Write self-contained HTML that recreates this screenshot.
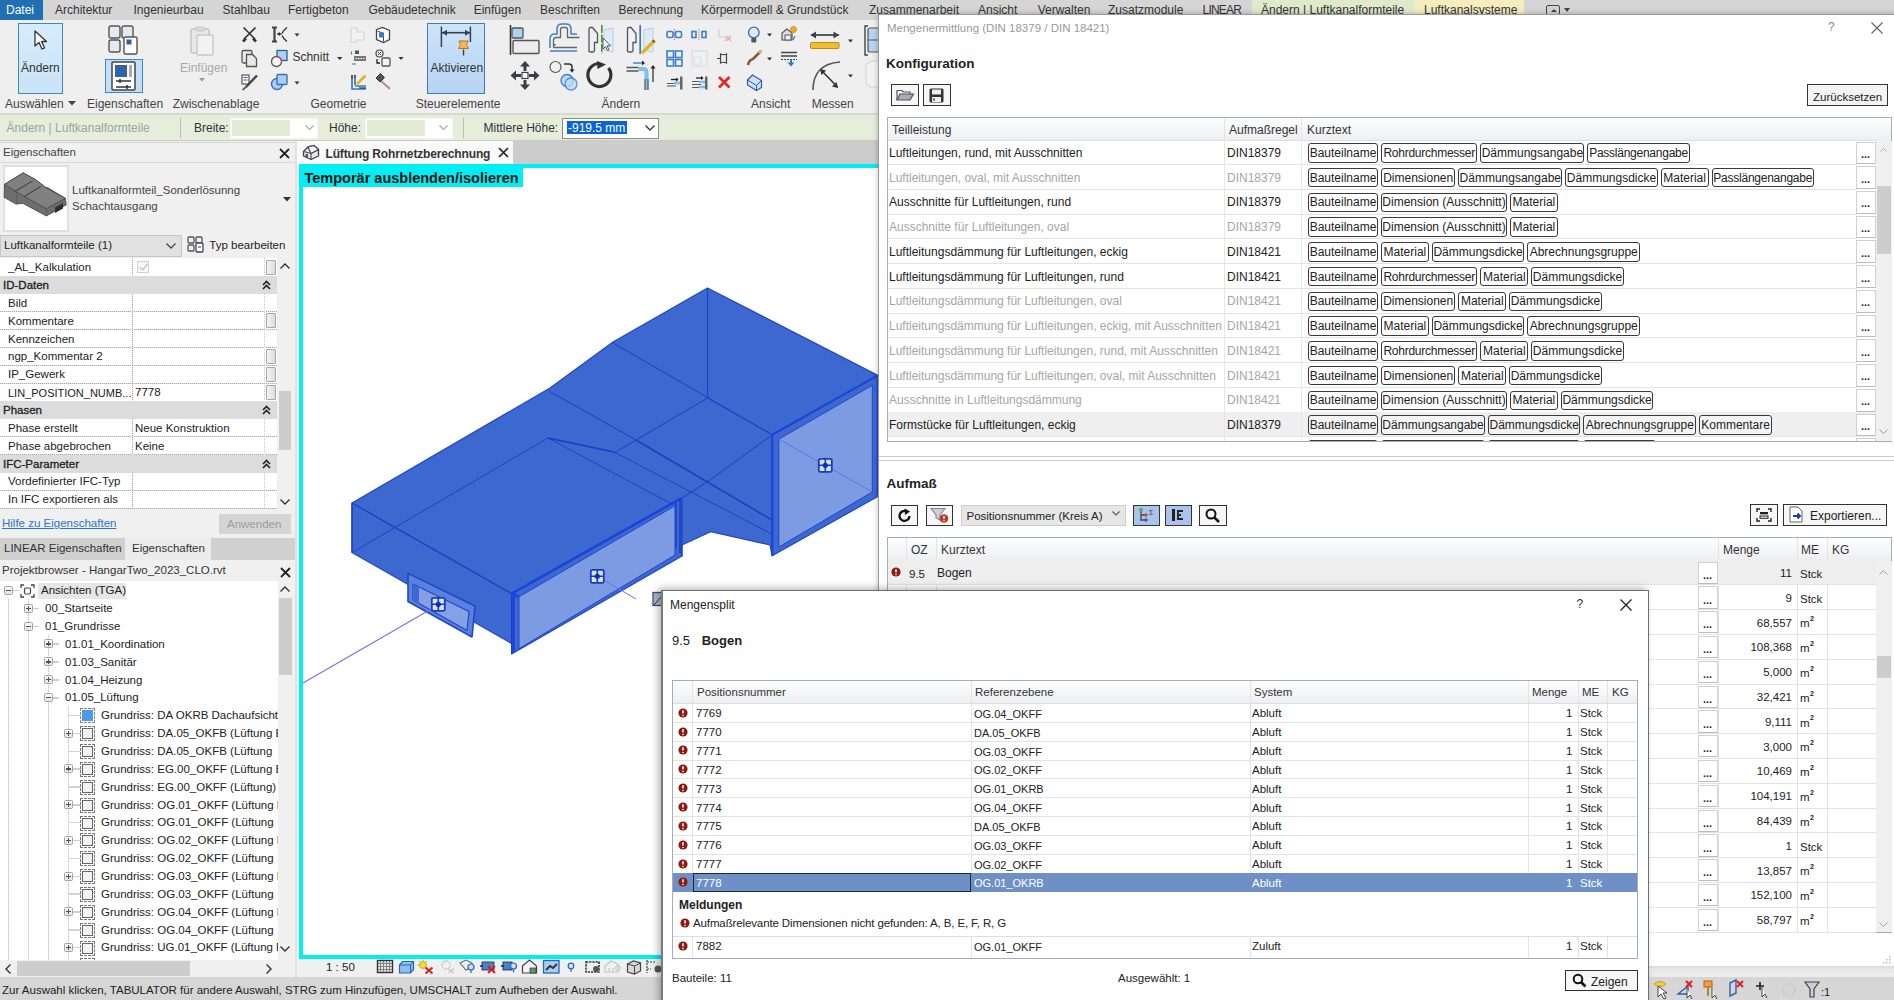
<!DOCTYPE html><html><head><meta charset="utf-8"><style>
html,body{margin:0;padding:0}
body{width:1894px;height:1000px;position:relative;overflow:hidden;background:#f0f0f0;font-family:"Liberation Sans",sans-serif;font-size:12px;color:#222}
.t{position:absolute;white-space:pre;line-height:1.15}
.b{position:absolute;box-sizing:border-box}
svg{position:absolute;overflow:visible}
</style></head><body>
<div class="b" style="left:0px;top:0px;width:1894px;height:20px;background:#d5d5d5"></div>
<div class="b" style="left:0px;top:0px;width:43px;height:19.5px;background:#1f6fb2"></div>
<div class="t" style="left:6px;top:4.3px;font-size:12px;color:#ffffff;">Datei</div>
<div class="t" style="left:55px;top:4.3px;font-size:12px;color:#333;">Architektur</div>
<div class="t" style="left:133.5px;top:4.3px;font-size:12px;color:#333;">Ingenieurbau</div>
<div class="t" style="left:222.6px;top:4.3px;font-size:12px;color:#333;">Stahlbau</div>
<div class="t" style="left:288px;top:4.3px;font-size:12px;color:#333;">Fertigbeton</div>
<div class="t" style="left:368.4px;top:4.3px;font-size:12px;color:#333;">Gebäudetechnik</div>
<div class="t" style="left:473.7px;top:4.3px;font-size:12px;color:#333;">Einfügen</div>
<div class="t" style="left:540px;top:4.3px;font-size:12px;color:#333;">Beschriften</div>
<div class="t" style="left:618.4px;top:4.3px;font-size:12px;color:#333;">Berechnung</div>
<div class="t" style="left:701px;top:4.3px;font-size:12px;color:#333;">Körpermodell &amp; Grundstück</div>
<div class="t" style="left:869px;top:4.3px;font-size:12px;color:#333;">Zusammenarbeit</div>
<div class="t" style="left:978px;top:4.3px;font-size:12px;color:#333;">Ansicht</div>
<div class="t" style="left:1037.7px;top:4.3px;font-size:12px;color:#333;">Verwalten</div>
<div class="t" style="left:1108px;top:4.3px;font-size:12px;color:#333;">Zusatzmodule</div>
<div class="t" style="left:1202.6px;top:4.3px;font-size:12px;color:#333;letter-spacing:-0.8px">LINEAR</div>
<div class="b" style="left:1251.5px;top:0px;width:162.5px;height:20px;background:#dfeacb"></div>
<div class="t" style="left:1261px;top:4.3px;font-size:12px;color:#333;">Ändern | Luftkanalformteile</div>
<div class="b" style="left:1414px;top:0px;width:110px;height:20px;background:#f6ecc0"></div>
<div class="t" style="left:1424px;top:4.3px;font-size:12px;color:#333;">Luftkanalsysteme</div>
<div class="b" style="left:1546px;top:5px;width:14px;height:10px;border:1.3px solid #444;border-radius:2px"></div>
<svg style="left:1550px;top:7px" width="8" height="6"><path d="M1 5 L4 2 L7 5Z" fill="#444"/></svg>
<svg style="left:1564px;top:8px" width="6" height="4"><path d="M0 0 L6 0 L3 4Z" fill="#444"/></svg>
<div class="b" style="left:0px;top:19.5px;width:879px;height:94px;background:#efefef"></div>
<div class="b" style="left:0px;top:112.5px;width:879px;height:1.5px;background:#d8d8d8"></div>
<div class="b" style="left:17.5px;top:22.5px;width:45px;height:71px;background:linear-gradient(#d6ecfb,#c9e4f7);border:1.5px solid #3f86c4"></div>
<svg style="left:33px;top:30px" width="16" height="22"><path d="M2 1 L2 16 L6 12.5 L9 19 L11.5 18 L8.7 11.5 L13.5 11.5 Z" fill="#fff" stroke="#333" stroke-width="1.3" stroke-linejoin="round"/></svg>
<div class="t" style="left:21px;top:61.8px;font-size:12px;color:#333;">Ändern</div>
<svg style="left:108px;top:25px" width="32" height="31"><rect x="1" y="1" width="11" height="12" rx="2" fill="#e6e8ee" stroke="#555" stroke-width="1.4"/><rect x="14" y="1" width="11" height="12" rx="2" fill="#e6e8ee" stroke="#555" stroke-width="1.4"/><rect x="1" y="15" width="11" height="12" rx="2" fill="#e6e8ee" stroke="#555" stroke-width="1.4"/><rect x="16" y="12" width="13" height="17" rx="1.5" fill="#fff" stroke="#555" stroke-width="1.4"/><rect x="18.5" y="14.5" width="5" height="5" fill="#2f5ea3"/></svg>
<div class="b" style="left:105px;top:59.4px;width:37.6px;height:33.2px;background:#c3def6;border:1.5px solid #3f86c4"></div>
<svg style="left:111px;top:61px" width="26" height="31"><rect x="1" y="1" width="23" height="28" rx="1" fill="#fff" stroke="#444" stroke-width="1.5"/><rect x="4" y="4" width="12" height="12" fill="#2f62a8"/><rect x="18" y="4" width="3" height="12" fill="#aaa"/><path d="M5 20 H20 M9 18v4 M5 26 H20 M16 24v4" stroke="#333" stroke-width="1.5"/></svg>
<svg style="left:188px;top:26px" width="30" height="32"><rect x="3" y="3" width="18" height="24" rx="2" fill="#e8e8e8" stroke="#c4c4c4" stroke-width="1.4"/><rect x="9" y="9" width="16" height="20" rx="1" fill="#f2f2f2" stroke="#c8c8c8" stroke-width="1.4"/><rect x="8" y="1" width="8" height="4" rx="1" fill="#ddd" stroke="#c4c4c4"/></svg>
<div class="t" style="left:180px;top:61.8px;font-size:12px;color:#a8a8a8;">Einfügen</div>
<svg style="left:199px;top:78px" width="6" height="4"><path d="M0 0 L6 0 L3 3.5Z" fill="#999"/></svg>
<div class="b" style="left:427.2px;top:22.8px;width:58px;height:70.8px;background:linear-gradient(#cde4fa,#b5d3f3);border:1.5px solid #3c7dc0"></div>
<div class="t" style="left:430.5px;top:61.8px;font-size:12px;color:#333;">Aktivieren</div>
<svg style="left:0;top:0" width="880" height="114">
<path d="M441.4 26.6 v20.4 M470.4 26.6 v15.4" stroke="#3a3f4a" stroke-width="1.5"/><path d="M442 32.7 h28" stroke="#3a3f4a" stroke-width="1.6"/><path d="M442 32.7 l5 -3 v6z M470 32.7 l-5 -3 v6z" fill="#3a3f4a"/><path d="M459 41 h9 l-1 2.5 q-1 1 0 2 l1.5 3 h-10 l1.5 -3 q1 -1 0 -2z" fill="#f4b850" stroke="#c07020" stroke-width="1"/><path d="M463.5 49.5 v6" stroke="#3a3f4a" stroke-width="1.4"/>
<g stroke="#333" stroke-width="1.6" fill="none"><path d="M243.5 27.5 L255 39 M255.5 27.5 L244 39"/><path d="M243 41.5 l3 -3 M256 41.5 l-3 -3" stroke-width="2.6"/></g>
<rect x="242" y="50.5" width="10" height="12.5" rx="1.5" fill="#eaeaea" stroke="#555" stroke-width="1.3"/><path d="M246.5 54.5 h6 l4 4 v8 h-10z" fill="#e8e8e8" stroke="#555" stroke-width="1.3"/>
<rect x="242" y="75" width="7" height="9" fill="#fff" stroke="#555" stroke-width="1.2"/><path d="M243.5 77.5h4 M243.5 80h4" stroke="#2e63ad" stroke-width="1.2"/><path d="M257 75.5 L246 87" stroke="#444" stroke-width="2.4"/><path d="M246.5 86.5 l-4 3.5" stroke="#666" stroke-width="2"/>
<path d="M272 27.5 h5 M272 41.5 h5 M274.5 27.5 v14" stroke="#444" stroke-width="2.2" fill="none"/><path d="M287 27.5 q-4 3 -5 6 M287 41.5 q-4 -3 -5 -6 M277.5 34 h4" stroke="#333" stroke-width="1.3" fill="none"/><path d="M277 34 l3 -2 v4z" fill="#333"/>
<path d="M294.5 33.5 h5 l-2.5 3z" fill="#333"/>
<rect x="277" y="50.5" width="10" height="10" fill="#a8d4f0" stroke="#2e5e9e" stroke-width="1.3"/><circle cx="276.5" cy="61.5" r="5" fill="#fff" stroke="#555" stroke-width="1.3"/><path d="M277 56.5 a5 5 0 0 1 4.5 5" stroke="#e0407a" stroke-width="1.3" fill="none"/>
<path d="M337 57 h5.5 l-2.75 3z" fill="#333"/>
<circle cx="277" cy="84" r="5.5" fill="#a9cff0" stroke="#3a70b8" stroke-width="1.4"/><rect x="277" y="74.5" width="10" height="10" rx="1" fill="#a9cff0" stroke="#3a70b8" stroke-width="1.4"/>
<path d="M294.5 81.5 h5 l-2.5 3z" fill="#333"/>
<path d="M351 28 h6 v4 h7 v8 h-7 v2 h-6z" fill="#f2f2f2" stroke="#d4d4d4" stroke-width="1.2"/>
<path d="M376.5 29.5 l6 -2 l7 3 v9 l-6 3 l-7 -3z" fill="#fff" stroke="#444" stroke-width="1.3"/><path d="M377.5 31 l6 2.5 v8" fill="none" stroke="#444" stroke-width="1"/><rect x="379" y="32.5" width="5" height="5" fill="#3a78c8"/>
<rect x="354" y="56" width="12" height="5" fill="#777"/><path d="M355.5 58.5h9" stroke="#fff" stroke-width="1" stroke-dasharray="1.5 1"/><rect x="355" y="50.5" width="4" height="3.5" fill="#555"/><path d="M351.5 51.5 v3 M352 64 h4" stroke="#3a78c8" stroke-width="1.2"/>
<circle cx="379.5" cy="53.5" r="3.5" fill="none" stroke="#444" stroke-width="1.2"/><path d="M378 52 l3 3 M381 52 l-3 3" stroke="#444" stroke-width="1"/><rect x="382" y="58" width="8" height="8" rx="1" fill="#f2f2f2" stroke="#555" stroke-width="1.3"/><path d="M377 59 v4 h3" stroke="#222" stroke-width="1.3" fill="none"/>
<path d="M398.5 57 h5 l-2.5 3z" fill="#333"/>
<path d="M352 75 v14 h14 M355 75 v10 M355 86 h11" stroke="#3a78c8" stroke-width="1.7" fill="none"/><path d="M352 75 v4 M355 75v3" stroke="#555" stroke-width="1.7"/><path d="M357 84 L365.5 75.5" stroke="#e8b020" stroke-width="2.6"/><path d="M359 88 h7" stroke="#333" stroke-width="1.2"/>
<path d="M380 80 L390 89" stroke="#c08a8a" stroke-width="2.2"/><path d="M376 78 l4.5 -4.5 l4 4 l-4.5 4.5z" fill="#555" stroke="#333" stroke-width="1"/>
<path d="M510.5 25 v30" stroke="#333" stroke-width="1.6"/><rect x="512" y="28" width="11" height="10" rx="1" fill="#a8d4f0" stroke="#555" stroke-width="1.3"/><rect x="513" y="40.5" width="26" height="13" rx="1" fill="#ececf0" stroke="#555" stroke-width="1.4"/>
<path d="M550 51 h27" stroke="#3a80cc" stroke-width="1.5"/><path d="M553 47 q0 -3 3 -3 h0 M556 44 v-6 h0" stroke="none"/><path d="M550 48 v-9 q0 -5 5 -5 h2 v-5 q0 -5 5 -5 h4 q5 0 5 5 v5 h6" stroke="#3a80cc" stroke-width="1.5" fill="none"/><path d="M553.5 47.5 v-7 q0 -3 3 -3 h4 v-8 q0 -2 2 -2 h3 q2 0 2 2 v8 h12 M553.5 47.5 h23.5" stroke="#666" stroke-width="1.3" fill="none"/>
<path d="M589 52 v-23 q0 -1.5 1.5 -1.5 h2 l5 6 v9 h-3 v8 q0 1.5 -1.5 1.5 h-2.5 q-1.5 0 -1.5 -1.5z" fill="#f0f0f4" stroke="#555" stroke-width="1.3"/><path d="M601.8 25 v29" stroke="#3a9a3a" stroke-width="1.6" stroke-dasharray="8 1.5"/><path d="M604 30 l9 -2 v24 l-9 -2z" fill="#dcecf8" stroke="#bcd" stroke-width="1"/><path d="M603 38 v11 l2.5 -2.5 l2 4 l1.5 -0.7 l-2 -4 h3.5z" fill="#fff" stroke="#444" stroke-width="0.9"/>
<path d="M627.5 52 v-23 q0 -1.5 1.5 -1.5 h2 l5 6 v9 h-3 v8 q0 1.5 -1.5 1.5 h-2.5 q-1.5 0 -1.5 -1.5z" fill="#f0f0f4" stroke="#555" stroke-width="1.3"/><path d="M640.2 25 v29" stroke="#3a78c8" stroke-width="1.7"/><path d="M644 30 l9 -2 v24 l-9 -2z" fill="#dcecf8" stroke="#bcd" stroke-width="1"/><path d="M642 53 L653 42" stroke="#e8b020" stroke-width="3.2"/><path d="M653 42 l1.5 -1.5" stroke="#8a5a20" stroke-width="3.2"/>
<path d="M525 61 l-5 5.5 h10z M525 90 l-5 -5.5 h10z M510.5 75.5 l5.5 -5 v10z M539.5 75.5 l-5.5 -5 v10z" fill="#3a3f4a"/><path d="M525 66 v5 M525 80 v5 M516 75.5 h5 M529 75.5 h5" stroke="#3a3f4a" stroke-width="3"/><rect x="522" y="72.5" width="6" height="6" fill="#fff" stroke="#3a3f4a" stroke-width="1.2"/>
<circle cx="555.5" cy="67" r="5.5" fill="#f0f0f4" stroke="#555" stroke-width="1.2"/><path d="M564 64 h5 q3 0 3 3 v3" stroke="#333" stroke-width="1.5" fill="none"/><path d="M569.5 69.5 h5 l-2.5 3z" fill="#222"/>
<circle cx="567" cy="80.5" r="6" fill="#bcdcf4" stroke="#3a80cc" stroke-width="1.3"/><circle cx="571" cy="84" r="6" fill="#bcdcf4" stroke="#3a80cc" stroke-width="1.3" opacity="0.8"/>
<path d="M608.5 68 A11.5 11.5 0 1 1 599 63.5" stroke="#333" stroke-width="3.2" fill="none"/><path d="M597 61 l9 3.5 -8.5 4.5z" fill="#333"/>
<path d="M626.5 67.5 h12 M626.5 71 h12" stroke="#555" stroke-width="1.3"/><path d="M638 69 h5.5 q3 0 3 3 v18" stroke="#7cc0f0" stroke-width="4" fill="none"/><path d="M645 79 v11 M648 79 v11" stroke="#555" stroke-width="1.1"/><path d="M633 63 h11" stroke="#3a80cc" stroke-width="1.4"/><path d="M645 63 l-3 -2.5 v5z" fill="#222"/><path d="M653 67 v15" stroke="#333" stroke-width="1.3"/><path d="M653 65 l-2.5 3.5 h5z" fill="#222"/>
<g stroke="#3a80cc" stroke-width="1.6" fill="none">
<rect x="667" y="31.5" width="6" height="6" rx="1.5"/><rect x="675.5" y="31.5" width="6" height="6" rx="1.5"/><path d="M673 34.5 h2.5"/>
<rect x="692" y="31.5" width="4" height="6"/><rect x="702" y="31.5" width="4" height="6"/>
<rect x="667" y="51" width="6.5" height="6.5"/><rect x="675.5" y="51" width="6.5" height="6.5"/><rect x="667" y="59.5" width="6.5" height="6.5"/><rect x="675.5" y="59.5" width="6.5" height="6.5"/>
</g>
<path d="M674.5 29 v11 M699 29 v11" stroke="#e0709a" stroke-width="1.1" stroke-dasharray="1.5 1"/>
<path d="M719 29 v8 h6 v4" stroke="#d0d0d0" stroke-width="1.2" fill="none"/><path d="M726 36 l5 5 M731 36 l-5 5" stroke="#e0a0b0" stroke-width="1.3"/>
<rect x="692" y="51" width="15" height="15" fill="#eef2f6" stroke="#d8dde2" stroke-width="1.2"/><rect x="694" y="57" width="7" height="7" fill="none" stroke="#d8dde2" stroke-width="1"/>
<path d="M717 58.5 h3 M720.5 54 q3 1.5 6 0 v9 q-3 -1.5 -6 0z" fill="#eee" stroke="#444" stroke-width="1.2"/>
<path d="M667 83.5 h9 M667 86 h9" stroke="#555" stroke-width="1.2"/><path d="M674 83 h6" stroke="#7cc0f0" stroke-width="3"/><path d="M671 79.5 h7" stroke="#222" stroke-width="1.3"/><path d="M678.5 79.5 l-2.5 -2 v4z" fill="#222"/><rect x="680" y="76.5" width="2.5" height="13" fill="#666"/>
<path d="M692 81.5 h9 M692 84.5 h9 M692 87.5 h9" stroke="#555" stroke-width="1.2"/><path d="M699 82 h7 M699 87 h7" stroke="#7cc0f0" stroke-width="2.5"/><path d="M696 78 h7" stroke="#222" stroke-width="1.3"/><path d="M703.5 78 l-2.5 -2 v4z" fill="#222"/><rect x="705" y="76.5" width="2.5" height="13" fill="#666"/>
<path d="M719 77 L729.5 87.5 M729.5 77 L719 87.5" stroke="#e02a2a" stroke-width="2.8"/>
<circle cx="753.8" cy="32.5" r="5.3" fill="#d8ecfc" stroke="#3a6cb0" stroke-width="1.3"/><rect x="751.3" y="38" width="5" height="4.5" rx="1" fill="#555"/><path d="M767 33.5 h5 l-2.5 3z" fill="#333"/>
<path d="M782 40 v-7 l5 -4 l5 4 v7z" fill="#dde" stroke="#555" stroke-width="1.2"/><rect x="785" y="35" width="6" height="5" fill="#f4f4f4" stroke="#555" stroke-width="1"/><circle cx="793.5" cy="29.5" r="3" fill="#f0a830" stroke="#d08010" stroke-width="0.8"/><path d="M795 36 l-2 4" stroke="#3a78c8" stroke-width="1.3"/>
<path d="M748 65 q1 -5 5 -6 l8 -8" stroke="#8a5a30" stroke-width="2.6" fill="none"/><path d="M759 53 l3 -3" stroke="#e0c080" stroke-width="2.2"/><path d="M767 57.5 h5 l-2.5 3z" fill="#333"/>
<path d="M781 52.5 h16 M781 56 h16" stroke="#444" stroke-width="1.3"/><path d="M781 59.5 h16" stroke="#444" stroke-width="1.1" stroke-dasharray="2 1"/><path d="M790 59.5 v3 h-2.5 l3.5 4 l3.5 -4 h-2.5 v-3z" fill="#2a78d8"/>
<path d="M747.5 80 l5 -5 l9 5.5 v7 l-5 3 l-9 -5.5z" fill="#cfe0f6" stroke="#2e5e9e" stroke-width="1.2"/><path d="M747.5 80 l9 5.5 v5 M756.5 85.5 l5 -5" stroke="#2e5e9e" stroke-width="1" fill="none"/>
<path d="M811 35 h28" stroke="#3a3f4a" stroke-width="1.7"/><path d="M810.5 35 l5.5 -3.5 v7z M839 35 l-5.5 -3.5 v7z" fill="#3a3f4a"/><rect x="810.5" y="42.5" width="28.5" height="6" rx="1" fill="#ecc030" stroke="#b89010" stroke-width="1"/><path d="M848 39.5 h5 l-2.5 3z" fill="#333"/>
<path d="M813 90 q0 -26 27 -28" stroke="#555" stroke-width="1.6" fill="none"/><path d="M821 70 L837.5 87" stroke="#333" stroke-width="1.5"/><path d="M820 69 l6 1.5 l-4.5 4.5z M838 88 l-1.5 -6 l-4.5 4.5z" fill="#333"/><path d="M848 74.5 h5 l-2.5 3z" fill="#333"/>
<path d="M868 26 h-3 v29 h3" stroke="#444" stroke-width="1.4" fill="none"/><rect x="868" y="28" width="11" height="24" rx="2" fill="#b9d3f0" stroke="#555" stroke-width="1.2"/><path d="M868 40 h11" stroke="#555"/>
<path d="M866 64 l6 -3 h7 v26 h-9 l-4 -3z" fill="#f2f2f2" stroke="#d6d6d6" stroke-width="1.2"/>
</svg>
<div class="t" style="left:292.4px;top:51.3px;font-size:12px;color:#333;">Schnitt</div>
<div class="t" style="left:5px;top:97.8px;font-size:12px;color:#444;">Auswählen</div>
<div class="t" style="left:87px;top:97.8px;font-size:12px;color:#444;">Eigenschaften</div>
<div class="t" style="left:172.7px;top:97.8px;font-size:12px;color:#444;">Zwischenablage</div>
<div class="t" style="left:310.5px;top:97.8px;font-size:12px;color:#444;">Geometrie</div>
<div class="t" style="left:415.7px;top:97.8px;font-size:12px;color:#444;">Steuerelemente</div>
<div class="t" style="left:601.5px;top:97.8px;font-size:12px;color:#444;">Ändern</div>
<div class="t" style="left:751px;top:97.8px;font-size:12px;color:#444;">Ansicht</div>
<div class="t" style="left:811.7px;top:97.8px;font-size:12px;color:#444;">Messen</div>
<svg style="left:68px;top:101px" width="8" height="5"><path d="M0 0 L8 0 L4 4.5Z" fill="#444"/></svg>
<div class="b" style="left:0px;top:114px;width:879px;height:27px;background:#e6edda;border-top:1px solid #d5dcc8;border-bottom:1px solid #c8cdbf"></div>
<div class="t" style="left:6.6px;top:122.3px;font-size:12px;color:#a0a4a0;">Ändern | Luftkanalformteile</div>
<div class="b" style="left:180px;top:118px;width:1px;height:20px;background:#b8bcb4"></div>
<div class="t" style="left:194px;top:122.3px;font-size:12px;color:#333;">Breite:</div>
<div class="b" style="left:230px;top:118px;width:88px;height:20.5px;background:#fff;border:1px solid #f4f4f4"></div>
<div class="b" style="left:232px;top:120px;width:58px;height:16px;background:#e3ecd4"></div>
<svg style="left:305px;top:125px" width="9" height="6"><path d="M0.5 0.5 L4.5 4.5 L8.5 0.5" stroke="#aaa" fill="none" stroke-width="1.2"/></svg>
<div class="t" style="left:329px;top:122.3px;font-size:12px;color:#333;">Höhe:</div>
<div class="b" style="left:364.6px;top:118px;width:88px;height:20.5px;background:#fff;border:1px solid #f4f4f4"></div>
<div class="b" style="left:366.6px;top:120px;width:58px;height:16px;background:#e3ecd4"></div>
<svg style="left:439px;top:125px" width="9" height="6"><path d="M0.5 0.5 L4.5 4.5 L8.5 0.5" stroke="#aaa" fill="none" stroke-width="1.2"/></svg>
<div class="b" style="left:463px;top:118px;width:1px;height:20px;background:#b8bcb4"></div>
<div class="t" style="left:483.5px;top:122.3px;font-size:12px;color:#333;">Mittlere Höhe:</div>
<div class="b" style="left:561.6px;top:117.5px;width:97px;height:21px;background:#fff;border:1px solid #8a8a8a"></div>
<div class="b" style="left:567px;top:121px;width:60px;height:13px;background:#0a64d4"></div>
<div class="t" style="left:568px;top:122.3px;font-size:12px;color:#fff;">-919.5 mm</div>
<svg style="left:645px;top:125px" width="10" height="6"><path d="M0.5 0.5 L5 5 L9.5 0.5" stroke="#333" fill="none" stroke-width="1.3"/></svg>
<div class="b" style="left:0px;top:141px;width:295px;height:836px;background:#f0f0f0"></div>
<div class="b" style="left:295px;top:141px;width:2px;height:836px;background:#e2e2e2"></div>
<div class="b" style="left:0px;top:141.5px;width:295px;height:1px;background:#d6d6d6"></div>
<div class="t" style="left:3px;top:146.3px;font-size:11.5px;color:#444;">Eigenschaften</div>
<svg style="left:279px;top:148px" width="11" height="11"><path d="M1 1 L10 10 M10 1 L1 10" stroke="#222" stroke-width="1.8"/></svg>
<div class="b" style="left:0px;top:162px;width:295px;height:1px;background:#d8d8d8"></div>
<div class="b" style="left:2.5px;top:164.5px;width:66px;height:67px;background:#fff;border:2px solid #e0e0e0"></div>
<svg style="left:0;top:0" width="70" height="235"><path d="M4.6 184.3 L23.2 172.9 L35.7 179.8 L45.6 187.4 L47.9 187.8 L65.4 198.4 L66.2 204.9 L46.4 215.9 L22.8 203.3 L16 204.1 L4.2 197.3 Z" fill="#6e6e6e" stroke="#4a4a4a" stroke-width="0.9"/><path d="M4.6 184.3 L23.2 172.9 L35.7 179.8 L45.6 187.4 L65.4 198.4 L46.4 208.7 L24.3 196.5 L16.7 192 Z" fill="#808080" stroke="#4a4a4a" stroke-width="0.9"/><path d="M15.2 191.2 L32.7 180.9 M24.3 196.5 L41 186.2" stroke="#444" stroke-width="1.1"/><path d="M46.4 208.7 V215.9 M16.7 192 V204" stroke="#555" stroke-width="0.8"/><path d="M55 207.5 L63 203 V208.5 L55 213 Z" fill="#2e2e2e"/></svg>
<div class="t" style="left:72px;top:184.0px;font-size:11.5px;color:#444;">Luftkanalformteil_Sonderlösunng</div>
<div class="t" style="left:72px;top:199.8px;font-size:11.5px;color:#444;">Schachtausgang</div>
<svg style="left:283px;top:197px" width="8" height="5"><path d="M0 0 L8 0 L4 4.5Z" fill="#333"/></svg>
<div class="b" style="left:0px;top:235.3px;width:182px;height:22.2px;background:#e1e1e1;border:1px solid #c6c6c6"></div>
<div class="t" style="left:4px;top:239.3px;font-size:11.5px;color:#222;">Luftkanalformteile (1)</div>
<svg style="left:166px;top:243px" width="10" height="6"><path d="M0.5 0.5 L5 5 L9.5 0.5" stroke="#444" fill="none" stroke-width="1.3"/></svg>
<svg style="left:187px;top:236px" width="18" height="17"><rect x="1" y="1" width="6" height="6" rx="1" fill="none" stroke="#555" stroke-width="1.3"/><rect x="9" y="1" width="6" height="6" rx="1" fill="none" stroke="#555" stroke-width="1.3"/><rect x="1" y="9" width="6" height="6" rx="1" fill="none" stroke="#555" stroke-width="1.3"/><rect x="9" y="7" width="7" height="9" rx="1" fill="#fff" stroke="#445" stroke-width="1.3"/><path d="M11 11h3" stroke="#345" /></svg>
<div class="t" style="left:209.3px;top:239.3px;font-size:11.5px;color:#222;">Typ bearbeiten</div>
<div class="b" style="left:0px;top:258.3px;width:277px;height:250.04px;background:#fff"></div>
<div class="b" style="left:0px;top:275.66px;width:277px;height:1px;background:repeating-linear-gradient(90deg,#a8a8a8 0 1px,#e4e4e4 1px 2px)"></div>
<div class="b" style="left:131.5px;top:258.3px;width:1.5px;height:17.86px;background:repeating-linear-gradient(180deg,#a8a8a8 0 1px,#f0f0f0 1px 2px)"></div>
<div class="b" style="left:264px;top:258.3px;width:1px;height:17.86px;background:repeating-linear-gradient(180deg,#c8c8c8 0 1px,#fff 1px 2px)"></div>
<div class="t" style="left:8px;top:261.1px;font-size:11.5px;color:#222;width:123px;overflow:hidden">_AL_Kalkulation</div>
<div class="b" style="left:137px;top:261.3px;width:12px;height:12px;border:1px solid #d0d0d0;background:#f8f8f8"></div>
<svg style="left:139px;top:263.3px" width="9" height="8"><path d="M0.5 4 L3.5 7 L8.5 1" stroke="#c4c4c4" fill="none" stroke-width="1.2"/></svg>
<div class="b" style="left:266px;top:259.8px;width:10px;height:14.86px;background:linear-gradient(90deg,#f4f4f4,#dcdcdc);border:1px solid #a8a8a8;border-radius:1px"></div>
<div class="b" style="left:0px;top:276.16px;width:277px;height:17.86px;background:#dcdcdc"></div>
<div class="t" style="left:3px;top:279.0px;font-size:11.5px;color:#222;-webkit-text-stroke:0.3px #222">ID-Daten</div>
<svg style="left:262px;top:280.2px" width="9" height="10"><path d="M1 5 L4.5 1.5 L8 5 M1 9 L4.5 5.5 L8 9" stroke="#222" stroke-width="1.6" fill="none"/></svg>
<div class="b" style="left:0px;top:311.38px;width:277px;height:1px;background:repeating-linear-gradient(90deg,#a8a8a8 0 1px,#e4e4e4 1px 2px)"></div>
<div class="b" style="left:131.5px;top:294.02px;width:1.5px;height:17.86px;background:repeating-linear-gradient(180deg,#a8a8a8 0 1px,#f0f0f0 1px 2px)"></div>
<div class="b" style="left:264px;top:294.02px;width:1px;height:17.86px;background:repeating-linear-gradient(180deg,#c8c8c8 0 1px,#fff 1px 2px)"></div>
<div class="t" style="left:8px;top:296.8px;font-size:11.5px;color:#222;width:123px;overflow:hidden">Bild</div>
<div class="b" style="left:0px;top:329.24px;width:277px;height:1px;background:repeating-linear-gradient(90deg,#a8a8a8 0 1px,#e4e4e4 1px 2px)"></div>
<div class="b" style="left:131.5px;top:311.88px;width:1.5px;height:17.86px;background:repeating-linear-gradient(180deg,#a8a8a8 0 1px,#f0f0f0 1px 2px)"></div>
<div class="b" style="left:264px;top:311.88px;width:1px;height:17.86px;background:repeating-linear-gradient(180deg,#c8c8c8 0 1px,#fff 1px 2px)"></div>
<div class="t" style="left:8px;top:314.7px;font-size:11.5px;color:#222;width:123px;overflow:hidden">Kommentare</div>
<div class="b" style="left:266px;top:313.38px;width:10px;height:14.86px;background:linear-gradient(90deg,#f4f4f4,#dcdcdc);border:1px solid #a8a8a8;border-radius:1px"></div>
<div class="b" style="left:0px;top:347.1px;width:277px;height:1px;background:repeating-linear-gradient(90deg,#a8a8a8 0 1px,#e4e4e4 1px 2px)"></div>
<div class="b" style="left:131.5px;top:329.74px;width:1.5px;height:17.86px;background:repeating-linear-gradient(180deg,#a8a8a8 0 1px,#f0f0f0 1px 2px)"></div>
<div class="b" style="left:264px;top:329.74px;width:1px;height:17.86px;background:repeating-linear-gradient(180deg,#c8c8c8 0 1px,#fff 1px 2px)"></div>
<div class="t" style="left:8px;top:332.5px;font-size:11.5px;color:#222;width:123px;overflow:hidden">Kennzeichen</div>
<div class="b" style="left:0px;top:364.96000000000004px;width:277px;height:1px;background:repeating-linear-gradient(90deg,#a8a8a8 0 1px,#e4e4e4 1px 2px)"></div>
<div class="b" style="left:131.5px;top:347.6px;width:1.5px;height:17.86px;background:repeating-linear-gradient(180deg,#a8a8a8 0 1px,#f0f0f0 1px 2px)"></div>
<div class="b" style="left:264px;top:347.6px;width:1px;height:17.86px;background:repeating-linear-gradient(180deg,#c8c8c8 0 1px,#fff 1px 2px)"></div>
<div class="t" style="left:8px;top:350.4px;font-size:11.5px;color:#222;width:123px;overflow:hidden">ngp_Kommentar 2</div>
<div class="b" style="left:266px;top:349.1px;width:10px;height:14.86px;background:linear-gradient(90deg,#f4f4f4,#dcdcdc);border:1px solid #a8a8a8;border-radius:1px"></div>
<div class="b" style="left:0px;top:382.82000000000005px;width:277px;height:1px;background:repeating-linear-gradient(90deg,#a8a8a8 0 1px,#e4e4e4 1px 2px)"></div>
<div class="b" style="left:131.5px;top:365.46000000000004px;width:1.5px;height:17.86px;background:repeating-linear-gradient(180deg,#a8a8a8 0 1px,#f0f0f0 1px 2px)"></div>
<div class="b" style="left:264px;top:365.46000000000004px;width:1px;height:17.86px;background:repeating-linear-gradient(180deg,#c8c8c8 0 1px,#fff 1px 2px)"></div>
<div class="t" style="left:8px;top:368.3px;font-size:11.5px;color:#222;width:123px;overflow:hidden">IP_Gewerk</div>
<div class="b" style="left:266px;top:366.96000000000004px;width:10px;height:14.86px;background:linear-gradient(90deg,#f4f4f4,#dcdcdc);border:1px solid #a8a8a8;border-radius:1px"></div>
<div class="b" style="left:0px;top:400.68px;width:277px;height:1px;background:repeating-linear-gradient(90deg,#a8a8a8 0 1px,#e4e4e4 1px 2px)"></div>
<div class="b" style="left:131.5px;top:383.32px;width:1.5px;height:17.86px;background:repeating-linear-gradient(180deg,#a8a8a8 0 1px,#f0f0f0 1px 2px)"></div>
<div class="b" style="left:264px;top:383.32px;width:1px;height:17.86px;background:repeating-linear-gradient(180deg,#c8c8c8 0 1px,#fff 1px 2px)"></div>
<div class="t" style="left:8px;top:386.6px;font-size:11px;color:#222;width:123px;overflow:hidden">LIN_POSITION_NUMB...</div>
<div class="t" style="left:135px;top:386.1px;font-size:11.5px;color:#222;">7778</div>
<div class="b" style="left:266px;top:384.82px;width:10px;height:14.86px;background:linear-gradient(90deg,#f4f4f4,#dcdcdc);border:1px solid #a8a8a8;border-radius:1px"></div>
<div class="b" style="left:0px;top:401.18px;width:277px;height:17.86px;background:#dcdcdc"></div>
<div class="t" style="left:3px;top:404.0px;font-size:11.5px;color:#222;-webkit-text-stroke:0.3px #222">Phasen</div>
<svg style="left:262px;top:405.2px" width="9" height="10"><path d="M1 5 L4.5 1.5 L8 5 M1 9 L4.5 5.5 L8 9" stroke="#222" stroke-width="1.6" fill="none"/></svg>
<div class="b" style="left:0px;top:436.40000000000003px;width:277px;height:1px;background:repeating-linear-gradient(90deg,#a8a8a8 0 1px,#e4e4e4 1px 2px)"></div>
<div class="b" style="left:131.5px;top:419.04px;width:1.5px;height:17.86px;background:repeating-linear-gradient(180deg,#a8a8a8 0 1px,#f0f0f0 1px 2px)"></div>
<div class="b" style="left:264px;top:419.04px;width:1px;height:17.86px;background:repeating-linear-gradient(180deg,#c8c8c8 0 1px,#fff 1px 2px)"></div>
<div class="t" style="left:8px;top:421.8px;font-size:11.5px;color:#222;width:123px;overflow:hidden">Phase erstellt</div>
<div class="t" style="left:135px;top:421.8px;font-size:11.5px;color:#222;">Neue Konstruktion</div>
<div class="b" style="left:0px;top:454.26px;width:277px;height:1px;background:repeating-linear-gradient(90deg,#a8a8a8 0 1px,#e4e4e4 1px 2px)"></div>
<div class="b" style="left:131.5px;top:436.9px;width:1.5px;height:17.86px;background:repeating-linear-gradient(180deg,#a8a8a8 0 1px,#f0f0f0 1px 2px)"></div>
<div class="b" style="left:264px;top:436.9px;width:1px;height:17.86px;background:repeating-linear-gradient(180deg,#c8c8c8 0 1px,#fff 1px 2px)"></div>
<div class="t" style="left:8px;top:439.7px;font-size:11.5px;color:#222;width:123px;overflow:hidden">Phase abgebrochen</div>
<div class="t" style="left:135px;top:439.7px;font-size:11.5px;color:#222;">Keine</div>
<div class="b" style="left:0px;top:454.76px;width:277px;height:17.86px;background:#dcdcdc"></div>
<div class="t" style="left:3px;top:457.6px;font-size:11.5px;color:#222;-webkit-text-stroke:0.3px #222">IFC-Parameter</div>
<svg style="left:262px;top:458.8px" width="9" height="10"><path d="M1 5 L4.5 1.5 L8 5 M1 9 L4.5 5.5 L8 9" stroke="#222" stroke-width="1.6" fill="none"/></svg>
<div class="b" style="left:0px;top:489.98px;width:277px;height:1px;background:repeating-linear-gradient(90deg,#a8a8a8 0 1px,#e4e4e4 1px 2px)"></div>
<div class="b" style="left:131.5px;top:472.62px;width:1.5px;height:17.86px;background:repeating-linear-gradient(180deg,#a8a8a8 0 1px,#f0f0f0 1px 2px)"></div>
<div class="b" style="left:264px;top:472.62px;width:1px;height:17.86px;background:repeating-linear-gradient(180deg,#c8c8c8 0 1px,#fff 1px 2px)"></div>
<div class="t" style="left:8px;top:475.4px;font-size:11.5px;color:#222;width:123px;overflow:hidden">Vordefinierter IFC-Typ</div>
<div class="b" style="left:0px;top:507.84000000000003px;width:277px;height:1px;background:repeating-linear-gradient(90deg,#a8a8a8 0 1px,#e4e4e4 1px 2px)"></div>
<div class="b" style="left:131.5px;top:490.48px;width:1.5px;height:17.86px;background:repeating-linear-gradient(180deg,#a8a8a8 0 1px,#f0f0f0 1px 2px)"></div>
<div class="b" style="left:264px;top:490.48px;width:1px;height:17.86px;background:repeating-linear-gradient(180deg,#c8c8c8 0 1px,#fff 1px 2px)"></div>
<div class="t" style="left:8px;top:493.3px;font-size:11.5px;color:#222;width:123px;overflow:hidden">In IFC exportieren als</div>
<div class="b" style="left:277px;top:257.5px;width:17px;height:251.5px;background:#f0f0f0"></div>
<div class="b" style="left:278.6px;top:391px;width:12.5px;height:58.5px;background:#cdcdcd"></div>
<svg style="left:280px;top:263px" width="10" height="6"><path d="M0.5 5.5 L5 1 L9.5 5.5" stroke="#333" fill="none" stroke-width="1.4"/></svg>
<svg style="left:280px;top:499px" width="10" height="6"><path d="M0.5 0.5 L5 5 L9.5 0.5" stroke="#333" fill="none" stroke-width="1.4"/></svg>
<div class="t" style="left:2px;top:517.3px;font-size:11.5px;color:#2a77c8;text-decoration:underline">Hilfe zu Eigenschaften</div>
<div class="b" style="left:219px;top:514px;width:72px;height:19.6px;background:#d5d5d5"></div>
<div class="t" style="left:227px;top:517.8px;font-size:11.5px;color:#9c9c9c;">Anwenden</div>
<div class="b" style="left:0px;top:538.3px;width:295px;height:21.4px;background:#d0d0d0"></div>
<div class="t" style="left:4px;top:542.3px;font-size:11.5px;color:#333;">LINEAR Eigenschaften</div>
<div class="b" style="left:125px;top:538.3px;width:86px;height:21.4px;background:#ececec"></div>
<div class="t" style="left:132px;top:542.3px;font-size:11.5px;color:#333;">Eigenschaften</div>
<div class="b" style="left:0px;top:559.7px;width:295px;height:21.5px;background:#f0f0f0"></div>
<div class="t" style="left:2px;top:564.3px;font-size:11.5px;color:#333;">Projektbrowser - HangarTwo_2023_CLO.rvt</div>
<svg style="left:280px;top:567px" width="11" height="11"><path d="M1 1 L10 10 M10 1 L1 10" stroke="#222" stroke-width="1.8"/></svg>
<div class="b" style="left:0px;top:581px;width:278px;height:379px;background:#fff;overflow:hidden"></div>
<div class="b" style="left:278px;top:581px;width:16px;height:379px;background:#f0f0f0"></div>
<div class="b" style="left:279px;top:598px;width:12.5px;height:77px;background:#cdcdcd"></div>
<svg style="left:280px;top:586px" width="10" height="6"><path d="M0.5 5.5 L5 1 L9.5 5.5" stroke="#333" fill="none" stroke-width="1.4"/></svg>
<svg style="left:280px;top:946px" width="10" height="6"><path d="M0.5 0.5 L5 5 L9.5 0.5" stroke="#333" fill="none" stroke-width="1.4"/></svg>
<div class="b" style="left:8px;top:599px;width:1px;height:361px;background:repeating-linear-gradient(180deg,#c4c4c4 0 1px,#ececec 1px 2px)"></div>
<div class="b" style="left:28px;top:599px;width:1px;height:361px;background:repeating-linear-gradient(180deg,#c4c4c4 0 1px,#ececec 1px 2px)"></div>
<div class="b" style="left:48px;top:635px;width:1px;height:325px;background:repeating-linear-gradient(180deg,#c4c4c4 0 1px,#ececec 1px 2px)"></div>
<div class="b" style="left:68px;top:706px;width:1px;height:254px;background:repeating-linear-gradient(180deg,#c4c4c4 0 1px,#ececec 1px 2px)"></div>
<div class="b" style="left:0;top:581px;width:278px;height:379px;overflow:hidden">
<div class="b" style="left:4px;top:4.925000000000001px;width:9px;height:9px;background:linear-gradient(#fafafa,#e4e4e4);border:1px solid #a0a4aa;border-radius:1.5px"></div>
<div class="b" style="left:6px;top:8.925px;width:5px;height:1.2px;background:#4a5260"></div>
<div class="b" style="left:13px;top:8.925px;width:6px;height:1.5px;background:#cfcfcf"></div>
<div class="b" style="left:38px;top:1.5px;width:88px;height:16.85px;background:#e6e6e6"></div>
<svg style="left:20px;top:2.5px" width="15" height="14"><path d="M1 4 V1 H4 M11 1 H14 V4 M14 10 V13 H11 M4 13 H1 V10" stroke="#444" stroke-width="1.3" fill="none"/><rect x="4.5" y="4" width="6" height="6" rx="1.5" fill="none" stroke="#444" stroke-width="1.2"/></svg>
<div class="t" style="left:41px;top:3.3px;font-size:11.5px;color:#222;">Ansichten (TGA)</div>
<div class="b" style="left:24px;top:22.775000000000023px;width:9px;height:9px;background:linear-gradient(#fafafa,#e4e4e4);border:1px solid #a0a4aa;border-radius:1.5px"></div>
<div class="b" style="left:26px;top:26.775000000000023px;width:5px;height:1.2px;background:#4a5260"></div>
<div class="b" style="left:27.9px;top:24.775000000000023px;width:1.2px;height:5px;background:#4a5260"></div>
<div class="b" style="left:33px;top:26.775000000000023px;width:6px;height:1.5px;background:#cfcfcf"></div>
<div class="t" style="left:45px;top:21.2px;font-size:11.5px;color:#222;">00_Startseite</div>
<div class="b" style="left:24px;top:40.62500000000004px;width:9px;height:9px;background:linear-gradient(#fafafa,#e4e4e4);border:1px solid #a0a4aa;border-radius:1.5px"></div>
<div class="b" style="left:26px;top:44.62500000000004px;width:5px;height:1.2px;background:#4a5260"></div>
<div class="b" style="left:33px;top:44.62500000000004px;width:6px;height:1.5px;background:#cfcfcf"></div>
<div class="t" style="left:45px;top:39.0px;font-size:11.5px;color:#222;">01_Grundrisse</div>
<div class="b" style="left:44px;top:58.47499999999995px;width:9px;height:9px;background:linear-gradient(#fafafa,#e4e4e4);border:1px solid #a0a4aa;border-radius:1.5px"></div>
<div class="b" style="left:46px;top:62.47499999999995px;width:5px;height:1.2px;background:#4a5260"></div>
<div class="b" style="left:47.9px;top:60.47499999999995px;width:1.2px;height:5px;background:#4a5260"></div>
<div class="b" style="left:53px;top:62.47499999999995px;width:6px;height:1.5px;background:#cfcfcf"></div>
<div class="t" style="left:65px;top:56.9px;font-size:11.5px;color:#222;">01.01_Koordination</div>
<div class="b" style="left:44px;top:76.32499999999997px;width:9px;height:9px;background:linear-gradient(#fafafa,#e4e4e4);border:1px solid #a0a4aa;border-radius:1.5px"></div>
<div class="b" style="left:46px;top:80.32499999999997px;width:5px;height:1.2px;background:#4a5260"></div>
<div class="b" style="left:47.9px;top:78.32499999999997px;width:1.2px;height:5px;background:#4a5260"></div>
<div class="b" style="left:53px;top:80.32499999999997px;width:6px;height:1.5px;background:#cfcfcf"></div>
<div class="t" style="left:65px;top:74.7px;font-size:11.5px;color:#222;">01.03_Sanitär</div>
<div class="b" style="left:44px;top:94.175px;width:9px;height:9px;background:linear-gradient(#fafafa,#e4e4e4);border:1px solid #a0a4aa;border-radius:1.5px"></div>
<div class="b" style="left:46px;top:98.175px;width:5px;height:1.2px;background:#4a5260"></div>
<div class="b" style="left:47.9px;top:96.175px;width:1.2px;height:5px;background:#4a5260"></div>
<div class="b" style="left:53px;top:98.175px;width:6px;height:1.5px;background:#cfcfcf"></div>
<div class="t" style="left:65px;top:92.6px;font-size:11.5px;color:#222;">01.04_Heizung</div>
<div class="b" style="left:44px;top:112.02500000000002px;width:9px;height:9px;background:linear-gradient(#fafafa,#e4e4e4);border:1px solid #a0a4aa;border-radius:1.5px"></div>
<div class="b" style="left:46px;top:116.02500000000002px;width:5px;height:1.2px;background:#4a5260"></div>
<div class="b" style="left:53px;top:116.02500000000002px;width:6px;height:1.5px;background:#cfcfcf"></div>
<div class="t" style="left:65px;top:110.4px;font-size:11.5px;color:#222;">01.05_Lüftung</div>
<div class="b" style="left:68px;top:133.87500000000006px;width:12px;height:1.5px;background:#d4d4d4"></div>
<div class="b" style="left:80px;top:127.45000000000005px;width:15px;height:15px;border:1px dashed #888"></div>
<div class="b" style="left:82px;top:129.45000000000005px;width:11px;height:11px;background:#4a9be8"></div>
<div class="t" style="left:101px;top:128.3px;font-size:11.5px;color:#222;">Grundriss: DA OKRB Dachaufsicht</div>
<div class="b" style="left:64px;top:147.72499999999997px;width:9px;height:9px;background:linear-gradient(#fafafa,#e4e4e4);border:1px solid #a0a4aa;border-radius:1.5px"></div>
<div class="b" style="left:66px;top:151.72499999999997px;width:5px;height:1.2px;background:#4a5260"></div>
<div class="b" style="left:67.9px;top:149.72499999999997px;width:1.2px;height:5px;background:#4a5260"></div>
<div class="b" style="left:73px;top:151.72499999999997px;width:8px;height:1.5px;background:#cfcfcf"></div>
<div class="b" style="left:80px;top:145.29999999999995px;width:15px;height:15px;border:1px dashed #777"></div>
<div class="b" style="left:82px;top:147.29999999999995px;width:11px;height:11px;background:#f2f2f2;border:1px solid #666"></div>
<div class="t" style="left:101px;top:146.1px;font-size:11.5px;color:#222;">Grundriss: DA.05_OKFB (Lüftung E</div>
<div class="b" style="left:68px;top:169.575px;width:12px;height:1.5px;background:#d4d4d4"></div>
<div class="b" style="left:80px;top:163.14999999999998px;width:15px;height:15px;border:1px dashed #777"></div>
<div class="b" style="left:82px;top:165.14999999999998px;width:11px;height:11px;background:#f2f2f2;border:1px solid #666"></div>
<div class="t" style="left:101px;top:164.0px;font-size:11.5px;color:#222;">Grundriss: DA.05_OKFB (Lüftung</div>
<div class="b" style="left:64px;top:183.425px;width:9px;height:9px;background:linear-gradient(#fafafa,#e4e4e4);border:1px solid #a0a4aa;border-radius:1.5px"></div>
<div class="b" style="left:66px;top:187.425px;width:5px;height:1.2px;background:#4a5260"></div>
<div class="b" style="left:67.9px;top:185.425px;width:1.2px;height:5px;background:#4a5260"></div>
<div class="b" style="left:73px;top:187.425px;width:8px;height:1.5px;background:#cfcfcf"></div>
<div class="b" style="left:80px;top:181.0px;width:15px;height:15px;border:1px dashed #777"></div>
<div class="b" style="left:82px;top:183.0px;width:11px;height:11px;background:#f2f2f2;border:1px solid #666"></div>
<div class="t" style="left:101px;top:181.8px;font-size:11.5px;color:#222;">Grundriss: EG.00_OKFF (Lüftung B</div>
<div class="b" style="left:68px;top:205.27500000000003px;width:12px;height:1.5px;background:#d4d4d4"></div>
<div class="b" style="left:80px;top:198.85000000000002px;width:15px;height:15px;border:1px dashed #777"></div>
<div class="b" style="left:82px;top:200.85000000000002px;width:11px;height:11px;background:#f2f2f2;border:1px solid #666"></div>
<div class="t" style="left:101px;top:199.7px;font-size:11.5px;color:#222;">Grundriss: EG.00_OKFF (Lüftung)</div>
<div class="b" style="left:64px;top:219.12500000000006px;width:9px;height:9px;background:linear-gradient(#fafafa,#e4e4e4);border:1px solid #a0a4aa;border-radius:1.5px"></div>
<div class="b" style="left:66px;top:223.12500000000006px;width:5px;height:1.2px;background:#4a5260"></div>
<div class="b" style="left:67.9px;top:221.12500000000006px;width:1.2px;height:5px;background:#4a5260"></div>
<div class="b" style="left:73px;top:223.12500000000006px;width:8px;height:1.5px;background:#cfcfcf"></div>
<div class="b" style="left:80px;top:216.70000000000005px;width:15px;height:15px;border:1px dashed #777"></div>
<div class="b" style="left:82px;top:218.70000000000005px;width:11px;height:11px;background:#f2f2f2;border:1px solid #666"></div>
<div class="t" style="left:101px;top:217.5px;font-size:11.5px;color:#222;">Grundriss: OG.01_OKFF (Lüftung E</div>
<div class="b" style="left:68px;top:240.97499999999997px;width:12px;height:1.5px;background:#d4d4d4"></div>
<div class="b" style="left:80px;top:234.54999999999995px;width:15px;height:15px;border:1px dashed #777"></div>
<div class="b" style="left:82px;top:236.54999999999995px;width:11px;height:11px;background:#f2f2f2;border:1px solid #666"></div>
<div class="t" style="left:101px;top:235.4px;font-size:11.5px;color:#222;">Grundriss: OG.01_OKFF (Lüftung</div>
<div class="b" style="left:64px;top:254.8250000000001px;width:9px;height:9px;background:linear-gradient(#fafafa,#e4e4e4);border:1px solid #a0a4aa;border-radius:1.5px"></div>
<div class="b" style="left:66px;top:258.8250000000001px;width:5px;height:1.2px;background:#4a5260"></div>
<div class="b" style="left:67.9px;top:256.8250000000001px;width:1.2px;height:5px;background:#4a5260"></div>
<div class="b" style="left:73px;top:258.8250000000001px;width:8px;height:1.5px;background:#cfcfcf"></div>
<div class="b" style="left:80px;top:252.4000000000001px;width:15px;height:15px;border:1px dashed #777"></div>
<div class="b" style="left:82px;top:254.4000000000001px;width:11px;height:11px;background:#f2f2f2;border:1px solid #666"></div>
<div class="t" style="left:101px;top:253.2px;font-size:11.5px;color:#222;">Grundriss: OG.02_OKFF (Lüftung E</div>
<div class="b" style="left:68px;top:276.675px;width:12px;height:1.5px;background:#d4d4d4"></div>
<div class="b" style="left:80px;top:270.25px;width:15px;height:15px;border:1px dashed #777"></div>
<div class="b" style="left:82px;top:272.25px;width:11px;height:11px;background:#f2f2f2;border:1px solid #666"></div>
<div class="t" style="left:101px;top:271.1px;font-size:11.5px;color:#222;">Grundriss: OG.02_OKFF (Lüftung</div>
<div class="b" style="left:64px;top:290.52500000000003px;width:9px;height:9px;background:linear-gradient(#fafafa,#e4e4e4);border:1px solid #a0a4aa;border-radius:1.5px"></div>
<div class="b" style="left:66px;top:294.52500000000003px;width:5px;height:1.2px;background:#4a5260"></div>
<div class="b" style="left:67.9px;top:292.52500000000003px;width:1.2px;height:5px;background:#4a5260"></div>
<div class="b" style="left:73px;top:294.52500000000003px;width:8px;height:1.5px;background:#cfcfcf"></div>
<div class="b" style="left:80px;top:288.1px;width:15px;height:15px;border:1px dashed #777"></div>
<div class="b" style="left:82px;top:290.1px;width:11px;height:11px;background:#f2f2f2;border:1px solid #666"></div>
<div class="t" style="left:101px;top:288.9px;font-size:11.5px;color:#222;">Grundriss: OG.03_OKFF (Lüftung E</div>
<div class="b" style="left:68px;top:312.37500000000006px;width:12px;height:1.5px;background:#d4d4d4"></div>
<div class="b" style="left:80px;top:305.95000000000005px;width:15px;height:15px;border:1px dashed #777"></div>
<div class="b" style="left:82px;top:307.95000000000005px;width:11px;height:11px;background:#f2f2f2;border:1px solid #666"></div>
<div class="t" style="left:101px;top:306.8px;font-size:11.5px;color:#222;">Grundriss: OG.03_OKFF (Lüftung</div>
<div class="b" style="left:64px;top:326.22499999999997px;width:9px;height:9px;background:linear-gradient(#fafafa,#e4e4e4);border:1px solid #a0a4aa;border-radius:1.5px"></div>
<div class="b" style="left:66px;top:330.22499999999997px;width:5px;height:1.2px;background:#4a5260"></div>
<div class="b" style="left:67.9px;top:328.22499999999997px;width:1.2px;height:5px;background:#4a5260"></div>
<div class="b" style="left:73px;top:330.22499999999997px;width:8px;height:1.5px;background:#cfcfcf"></div>
<div class="b" style="left:80px;top:323.79999999999995px;width:15px;height:15px;border:1px dashed #777"></div>
<div class="b" style="left:82px;top:325.79999999999995px;width:11px;height:11px;background:#f2f2f2;border:1px solid #666"></div>
<div class="t" style="left:101px;top:324.6px;font-size:11.5px;color:#222;">Grundriss: OG.04_OKFF (Lüftung E</div>
<div class="b" style="left:68px;top:348.0750000000001px;width:12px;height:1.5px;background:#d4d4d4"></div>
<div class="b" style="left:80px;top:341.6500000000001px;width:15px;height:15px;border:1px dashed #777"></div>
<div class="b" style="left:82px;top:343.6500000000001px;width:11px;height:11px;background:#f2f2f2;border:1px solid #666"></div>
<div class="t" style="left:101px;top:342.5px;font-size:11.5px;color:#222;">Grundriss: OG.04_OKFF (Lüftung</div>
<div class="b" style="left:64px;top:361.925px;width:9px;height:9px;background:linear-gradient(#fafafa,#e4e4e4);border:1px solid #a0a4aa;border-radius:1.5px"></div>
<div class="b" style="left:66px;top:365.925px;width:5px;height:1.2px;background:#4a5260"></div>
<div class="b" style="left:67.9px;top:363.925px;width:1.2px;height:5px;background:#4a5260"></div>
<div class="b" style="left:73px;top:365.925px;width:8px;height:1.5px;background:#cfcfcf"></div>
<div class="b" style="left:80px;top:359.5px;width:15px;height:15px;border:1px dashed #777"></div>
<div class="b" style="left:82px;top:361.5px;width:11px;height:11px;background:#f2f2f2;border:1px solid #666"></div>
<div class="t" style="left:101px;top:360.3px;font-size:11.5px;color:#222;">Grundriss: UG.01_OKFF (Lüftung E</div>
<div class="b" style="left:68px;top:383.77500000000003px;width:12px;height:1.5px;background:#d4d4d4"></div>
<div class="b" style="left:80px;top:377.35px;width:15px;height:15px;border:1px dashed #777"></div>
<div class="b" style="left:82px;top:379.35px;width:11px;height:11px;background:#f2f2f2;border:1px solid #666"></div>
</div>
<div class="b" style="left:0px;top:960px;width:295px;height:17px;background:#f0f0f0"></div>
<div class="b" style="left:17px;top:961px;width:173px;height:15px;background:#cdcdcd"></div>
<svg style="left:5px;top:964px" width="6" height="10"><path d="M5.5 0.5 L1 5 L5.5 9.5" stroke="#333" fill="none" stroke-width="1.4"/></svg>
<svg style="left:266px;top:964px" width="6" height="10"><path d="M0.5 0.5 L5 5 L0.5 9.5" stroke="#333" fill="none" stroke-width="1.4"/></svg>
<div class="b" style="left:0px;top:977px;width:1894px;height:23px;background:#d6d6d6"></div>
<div class="t" style="left:2px;top:984.3px;font-size:11.5px;color:#222;">Zur Auswahl klicken, TABULATOR für andere Auswahl, STRG zum Hinzufügen, UMSCHALT zum Aufheben der Auswahl.</div>
<div class="b" style="left:297px;top:141px;width:582px;height:22.5px;background:#cccccc"></div>
<div class="b" style="left:297px;top:141px;width:216px;height:22.5px;background:#fafafa"></div>
<svg style="left:302px;top:144px" width="18" height="17"><path d="M1.5 7.5 L6 3 L12 1.5 L16.5 5.5 V12 L9 15.5 L1.5 12 Z" fill="#e4e6ea" stroke="#444" stroke-width="1.3" stroke-linejoin="round"/><path d="M1.5 7.5 L9 9.5 L16.5 5.5 M9 9.5 V15.5" stroke="#444" stroke-width="1.1" fill="none"/><path d="M6 3 L12 1.5 L16.5 5.5 L9 9.5 Z" fill="#f8f8f8" stroke="#444" stroke-width="1.1"/><rect x="3.5" y="10" width="2.5" height="4" fill="#555"/></svg>
<div class="t" style="left:325.5px;top:147.8px;font-size:12px;color:#333;font-weight:bold;letter-spacing:-0.15px">Lüftung Rohrnetzberechnung</div>
<svg style="left:498px;top:147px" width="11" height="11"><path d="M1 1 L10 10 M10 1 L1 10" stroke="#222" stroke-width="1.7"/></svg>
<div class="b" style="left:299px;top:163.6px;width:580px;height:795.4px;background:#00eef4"></div>
<div class="b" style="left:303px;top:168px;width:576px;height:787px;background:#ffffff"></div>
<div class="b" style="left:303px;top:168px;width:219.7px;height:19px;background:#00eef4"></div>
<div class="t" style="left:304.5px;top:169.5px;font-size:14.5px;color:#111;font-weight:bold;letter-spacing:0px">Temporär ausblenden/isolieren</div>
<div class="b" style="left:297px;top:959px;width:582px;height:18px;background:#f0f0f0"></div>
<div class="t" style="left:326px;top:961.3px;font-size:11.5px;color:#222;">1 : 50</div>
<svg style="left:0;top:0" width="880" height="1000">
<rect x="377.5" y="960.5" width="15" height="12" fill="#e8e8e8" stroke="#333" stroke-width="1.4"/><path d="M378 963.5 h14 M378 966.5 h14 M378 969.5 h14 M380.5 961 v11 M383.5 961 v11 M386.5 961 v11 M389.5 961 v11" stroke="#777" stroke-width="0.9"/>
<path d="M399.5 965 l3 -3.5 h11 v8 l-3 3.5 h-11z" fill="#8ec0ee" stroke="#2a66b8" stroke-width="1.2"/><path d="M399.5 965 h11 l3 -3.5 M410.5 965 v8" stroke="#2a66b8" stroke-width="1" fill="none"/>
<circle cx="423" cy="965" r="3.5" fill="#f4d83a" stroke="#c8a010" stroke-width="0.8"/><path d="M423 959.5v2 M417.5 965h2 M419 961l1.4 1.4 M427 961l-1.4 1.4" stroke="#d0a010" stroke-width="1"/><path d="M425.5 967.5 l7 6 M432.5 967.5 l-7 6" stroke="#d42020" stroke-width="2"/>
<circle cx="446" cy="965" r="4" fill="none" stroke="#d0d0d0" stroke-width="1.3"/><path d="M448 969 l6 4 M454 968 l-5 5" stroke="#c8c8c8" stroke-width="1.5"/>
<path d="M460 963 l6 -3 l6 3 v4 l-6 3 z" fill="none" stroke="#666" stroke-width="1.1"/><circle cx="471" cy="967" r="3" fill="#cde0f6" stroke="#2a66b8" stroke-width="1.2"/><path d="M471 970 v3" stroke="#2a66b8" stroke-width="1.2"/>
<rect x="482" y="962" width="12" height="8" fill="#4a80cc" stroke="#224" stroke-width="0.8"/><path d="M480 966 h3" stroke="#224" stroke-width="1.5"/><path d="M488 966 l7 7 M495 966 l-7 7" stroke="#d42020" stroke-width="2"/>
<rect x="503" y="962" width="9" height="8" fill="#4a80cc" stroke="#224" stroke-width="0.8"/><path d="M501 966 h3" stroke="#224" stroke-width="1.5"/><circle cx="513.5" cy="966" r="3" fill="#cde0f6" stroke="#2a66b8" stroke-width="1.2"/><path d="M513.5 969 v3.5" stroke="#2a66b8" stroke-width="1.2"/>
<path d="M522.5 966 l7 -6 l7 6 v7 h-14z" fill="#f4f4f4" stroke="#444" stroke-width="1.2"/><rect x="530" y="968" width="6" height="5" fill="#5a9a6a" stroke="#335" stroke-width="0.7"/>
<rect x="543.5" y="960.5" width="15.5" height="12.5" fill="#a8cdf0" stroke="#2a66b8" stroke-width="1.3"/><path d="M546 970 l4 -4 l3 2 l4 -4" stroke="#333" stroke-width="1.8" fill="none"/>
<circle cx="571" cy="966" r="2.8" fill="#cde0f6" stroke="#2a66b8" stroke-width="1.2"/><path d="M571 969 v3" stroke="#2a66b8" stroke-width="1.2"/>
<rect x="586" y="962" width="13" height="10" fill="none" stroke="#333" stroke-width="1.6" stroke-dasharray="2.2 1"/><circle cx="596" cy="969" r="3" fill="#555"/>
<path d="M605 966 l6 -5 l7 3 v8 h-13z M609 968 v4 M613 968 v4" fill="none" stroke="#c4c4c4" stroke-width="1.1"/><circle cx="618" cy="968" r="2.5" fill="none" stroke="#c4c4c4" stroke-width="1"/>
<path d="M627.5 964 l6 -3 l7 2 v8 l-6 3 l-7 -2z" fill="#d8d8d8" stroke="#444" stroke-width="1.2"/><path d="M627.5 964 l7 2 l6 -3 M634.5 966 v8" stroke="#444" stroke-width="1" fill="none"/>
<path d="M647 960 v13 M647 962 h8 M647 969 h4" stroke="#444" stroke-width="1.2" stroke-dasharray="2 1"/><circle cx="658" cy="969" r="3.5" fill="#555"/>
</svg>
<svg style="left:0px;top:0px" width="1894" height="1000">
<g stroke-linejoin="round">
<polygon points="352,503 550,388 613,342 707.5,288 877.8,375.4 877.8,496.4 772.2,555.8 770,545 710.6,531.6 682,545 682,556 511.6,654 511.6,643.5 352,552.6" fill="#3d68cf" stroke="#1f47c8" stroke-width="1.2"/>
<polygon points="519,596.8 675,505.8 675,555 519,648.7" fill="#7c9be3" stroke="#1f47c8" stroke-width="1"/>
<polygon points="778.8,439.2 872.3,385.3 872.3,492 778.8,547" fill="#7c9be3" stroke="#1f47c8" stroke-width="1"/>
<polygon points="408,573.4 475,606 472,637 408,601.5" fill="#5c80de" stroke="#1f47c8" stroke-width="1.6"/>
<polygon points="413,584 469,611.5 467,630.5 413,600" fill="#86a0e6" stroke="#1f47c8" stroke-width="1.2"/><path d="M413 584 v17 l6 3 v-16z" fill="#3d68cf"/>
</g>
<g stroke="#1a3fc6" fill="none">
<path d="M352 503 L511.6 593.6 L681.8 498 M511.6 593.6 V654 M681.8 498 V556.5 M352 503 V552.6" stroke-width="1.3"/>
<path d="M511.6 593.6 L519 596.8 M513.5 596 V652 M511.6 593.6 L681.8 498" stroke-width="2.6" stroke="#1b45d8"/>
<path d="M352 552.6 L548 438 L675 505.8 M548 438 L614 452 L772 534" stroke-width="0.9"/>
<path d="M549 391 L636 440 M613 343 L772.2 434.8 M707.6 288 V398 L772.2 434.8 M707.6 398 L614 453 M772.2 434.8 L710 480 L682 498" stroke-width="1"/>
<path d="M636 440 L772 520 M548 438 L614 452" stroke-width="1.5"/>
<path d="M772.2 434.8 L877.8 375.4 M772.2 434.8 V555.8 M877.8 375.4 V496.4" stroke-width="2.2" stroke="#1b45d8"/>
<path d="M676 503 V548 M680 500 V553" stroke-width="1.5"/>
</g>
<path d="M303 683 L440 604" stroke="#7b6cf0" stroke-width="1.1"/>
<path d="M597 576 L636 599" stroke="#7b6cf0" stroke-width="1"/>
<path d="M778.8 439.2 L872.3 492" stroke="#5a6ff0" stroke-width="0.9"/>
<g transform="translate(438.3 604.3)"><rect x="-6.5" y="-6.5" width="13" height="13" rx="1.5" fill="#d2e8fa" stroke="#1f3ab8" stroke-width="1.8"/><path d="M0 -6.5 V6.5 M-6.5 0 H6.5" stroke="#1f3ab8" stroke-width="1.6"/><circle r="2.6" fill="#0a2ad0"/></g>
<g transform="translate(597.3 576.3)"><rect x="-6.5" y="-6.5" width="13" height="13" rx="1.5" fill="#d2e8fa" stroke="#1f3ab8" stroke-width="1.8"/><path d="M0 -6.5 V6.5 M-6.5 0 H6.5" stroke="#1f3ab8" stroke-width="1.6"/><circle r="2.6" fill="#0a2ad0"/></g>
<g transform="translate(825.3 465.3)"><rect x="-6.5" y="-6.5" width="13" height="13" rx="1.5" fill="#d2e8fa" stroke="#1f3ab8" stroke-width="1.8"/><path d="M0 -6.5 V6.5 M-6.5 0 H6.5" stroke="#1f3ab8" stroke-width="1.6"/><circle r="2.6" fill="#0a2ad0"/></g>
<rect x="653" y="592.5" width="9" height="13" fill="#a8b8d4" stroke="#4a5060" stroke-width="1.3"/><path d="M654 605 L661 597" stroke="#334" stroke-width="1"/>
</svg>
<div class="b" style="left:878px;top:13.5px;width:1020px;height:953.5px;background:#fff;border:1px solid #9a9a9a;box-shadow:0 0 6px rgba(0,0,0,0.25)"></div>
<div class="t" style="left:887px;top:21.8px;font-size:11.5px;color:#9a9a9a;">Mengenermittlung (DIN 18379 / DIN 18421)</div>
<div class="t" style="left:1828px;top:21.3px;font-size:12px;color:#888;">?</div>
<svg style="left:1871px;top:22px" width="12" height="12"><path d="M0.5 0.5 L11.5 11.5 M11.5 0.5 L0.5 11.5" stroke="#666" stroke-width="1.2"/></svg>
<div class="t" style="left:886px;top:55.6px;font-size:13.5px;color:#222;font-weight:bold;">Konfiguration</div>
<div class="b" style="left:891px;top:84px;width:28px;height:22px;border:1.5px solid #333;background:#f6f6f6"></div>
<svg style="left:896px;top:88px" width="19" height="14"><path d="M1 12 V2.5 H6 L7.5 4 H14 V6" fill="none" stroke="#555" stroke-width="1.2"/><path d="M1 12 L4 6 H17.5 L14 12 Z" fill="#aab" stroke="#555" stroke-width="1.2"/></svg>
<div class="b" style="left:923px;top:84px;width:28px;height:22px;border:1.5px solid #333;background:#f6f6f6"></div>
<svg style="left:929px;top:88px" width="16" height="15"><rect x="0.5" y="0.5" width="14" height="14" rx="1.5" fill="#333"/><rect x="3" y="1.5" width="9" height="5" fill="#eee"/><rect x="3" y="9" width="9" height="5" fill="#eee"/><rect x="4" y="10.5" width="2" height="2" fill="#555"/></svg>
<div class="b" style="left:1807px;top:84px;width:81px;height:22px;border:1.5px solid #333;background:#f4f4f4"></div>
<div class="t" style="left:1813px;top:90.8px;font-size:11.5px;color:#222;">Zurücksetzen</div>
<div class="b" style="left:886.5px;top:116.5px;width:1005.5px;height:325px;border:1px solid #a4adb8;background:#fff;overflow:hidden"></div>
<div class="b" style="left:887.5px;top:117.5px;width:1003.5px;height:23.5px;background:linear-gradient(#fdfdfd,#f4f5f7 60%,#eceef1)"></div>
<div class="b" style="left:887.5px;top:140px;width:989px;height:1px;background:#dcdfe3"></div>
<div class="b" style="left:1224.3px;top:117.5px;width:1px;height:23px;background:#e2e4e8"></div>
<div class="b" style="left:1301px;top:117.5px;width:1px;height:23px;background:#e2e4e8"></div>
<div class="t" style="left:892px;top:123.8px;font-size:12px;color:#333;">Teilleistung</div>
<div class="t" style="left:1229px;top:123.8px;font-size:12px;color:#333;">Aufmaßregel</div>
<div class="t" style="left:1307px;top:123.8px;font-size:12px;color:#333;">Kurztext</div>
<div class="b" style="left:887.5px;top:141px;width:988.5px;height:300px;overflow:hidden">
<div class="b" style="left:0px;top:23.24px;width:969px;height:1px;background:#e3e3e3"></div>
<div class="b" style="left:336.79999999999995px;top:-1.0px;width:1px;height:24.74px;background:#e6e6e6"></div>
<div class="b" style="left:413.5px;top:-1.0px;width:1px;height:24.74px;background:#e6e6e6"></div>
<div class="t" style="left:1.5px;top:5.8px;font-size:12px;color:#222;width:334px;overflow:hidden">Luftleitungen, rund, mit Ausschnitten</div>
<div class="t" style="left:339.5px;top:5.8px;font-size:12px;color:#222;">DIN18379</div>
<div class="b" style="left:420.5px;top:2.2px;width:70px;height:19.6px;border:1.3px solid #3a3a3a;border-radius:3px;background:#fff"></div>
<div class="t" style="left:420.5px;top:5.9px;width:70px;text-align:center;font-size:12px;color:#222;letter-spacing:0px">Bauteilname</div>
<div class="b" style="left:493.5px;top:2.2px;width:96.4px;height:19.6px;border:1.3px solid #3a3a3a;border-radius:3px;background:#fff"></div>
<div class="t" style="left:493.5px;top:5.9px;width:96.4px;text-align:center;font-size:12px;color:#222;letter-spacing:-0.25px">Rohrdurchmesser</div>
<div class="b" style="left:592.9px;top:2.2px;width:104px;height:19.6px;border:1.3px solid #3a3a3a;border-radius:3px;background:#fff"></div>
<div class="t" style="left:592.9px;top:5.9px;width:104px;text-align:center;font-size:12px;color:#222;letter-spacing:0px">Dämmungsangabe</div>
<div class="b" style="left:699.9px;top:2.2px;width:102.3px;height:19.6px;border:1.3px solid #3a3a3a;border-radius:3px;background:#fff"></div>
<div class="t" style="left:699.9px;top:5.9px;width:102.3px;text-align:center;font-size:12px;color:#222;letter-spacing:-0.25px">Passlängenangabe</div>
<div class="b" style="left:968.5px;top:0.5px;width:20px;height:22.74px;background:#fff;border:1px solid #d0d0d0;border-bottom-color:#bbb"></div>
<div class="t" style="left:973.5px;top:6.8px;font-size:11px;color:#222;font-weight:bold;">...</div>
<div class="b" style="left:0px;top:47.980000000000004px;width:969px;height:1px;background:#e3e3e3"></div>
<div class="b" style="left:336.79999999999995px;top:23.74000000000001px;width:1px;height:24.74px;background:#e6e6e6"></div>
<div class="b" style="left:413.5px;top:23.74000000000001px;width:1px;height:24.74px;background:#e6e6e6"></div>
<div class="t" style="left:1.5px;top:30.6px;font-size:12px;color:#a6a6a6;width:334px;overflow:hidden">Luftleitungen, oval, mit Ausschnitten</div>
<div class="t" style="left:339.5px;top:30.6px;font-size:12px;color:#a6a6a6;">DIN18379</div>
<div class="b" style="left:420.5px;top:26.9px;width:70px;height:19.6px;border:1.3px solid #3a3a3a;border-radius:3px;background:#fff"></div>
<div class="t" style="left:420.5px;top:30.6px;width:70px;text-align:center;font-size:12px;color:#222;letter-spacing:0px">Bauteilname</div>
<div class="b" style="left:493.5px;top:26.9px;width:74.3px;height:19.6px;border:1.3px solid #3a3a3a;border-radius:3px;background:#fff"></div>
<div class="t" style="left:493.5px;top:30.6px;width:74.3px;text-align:center;font-size:12px;color:#222;letter-spacing:0px">Dimensionen</div>
<div class="b" style="left:570.8px;top:26.9px;width:104px;height:19.6px;border:1.3px solid #3a3a3a;border-radius:3px;background:#fff"></div>
<div class="t" style="left:570.8px;top:30.6px;width:104px;text-align:center;font-size:12px;color:#222;letter-spacing:0px">Dämmungsangabe</div>
<div class="b" style="left:677.8px;top:26.9px;width:92.4px;height:19.6px;border:1.3px solid #3a3a3a;border-radius:3px;background:#fff"></div>
<div class="t" style="left:677.8px;top:30.6px;width:92.4px;text-align:center;font-size:12px;color:#222;letter-spacing:0px">Dämmungsdicke</div>
<div class="b" style="left:773.2px;top:26.9px;width:47.9px;height:19.6px;border:1.3px solid #3a3a3a;border-radius:3px;background:#fff"></div>
<div class="t" style="left:773.2px;top:30.6px;width:47.9px;text-align:center;font-size:12px;color:#222;letter-spacing:0px">Material</div>
<div class="b" style="left:824.1px;top:26.9px;width:102.3px;height:19.6px;border:1.3px solid #3a3a3a;border-radius:3px;background:#fff"></div>
<div class="t" style="left:824.1px;top:30.6px;width:102.3px;text-align:center;font-size:12px;color:#222;letter-spacing:-0.25px">Passlängenangabe</div>
<div class="b" style="left:968.5px;top:25.24000000000001px;width:20px;height:22.74px;background:#fff;border:1px solid #d0d0d0;border-bottom-color:#bbb"></div>
<div class="t" style="left:973.5px;top:31.5px;font-size:11px;color:#222;font-weight:bold;">...</div>
<div class="b" style="left:0px;top:72.71999999999998px;width:969px;height:1px;background:#e3e3e3"></div>
<div class="b" style="left:336.79999999999995px;top:48.47999999999999px;width:1px;height:24.74px;background:#e6e6e6"></div>
<div class="b" style="left:413.5px;top:48.47999999999999px;width:1px;height:24.74px;background:#e6e6e6"></div>
<div class="t" style="left:1.5px;top:55.3px;font-size:12px;color:#222;width:334px;overflow:hidden">Ausschnitte für Luftleitungen, rund</div>
<div class="t" style="left:339.5px;top:55.3px;font-size:12px;color:#222;">DIN18379</div>
<div class="b" style="left:420.5px;top:51.7px;width:70px;height:19.6px;border:1.3px solid #3a3a3a;border-radius:3px;background:#fff"></div>
<div class="t" style="left:420.5px;top:55.4px;width:70px;text-align:center;font-size:12px;color:#222;letter-spacing:0px">Bauteilname</div>
<div class="b" style="left:493.5px;top:51.7px;width:126px;height:19.6px;border:1.3px solid #3a3a3a;border-radius:3px;background:#fff"></div>
<div class="t" style="left:493.5px;top:55.4px;width:126px;text-align:center;font-size:12px;color:#222;letter-spacing:0px">Dimension (Ausschnitt)</div>
<div class="b" style="left:622.5px;top:51.7px;width:47.9px;height:19.6px;border:1.3px solid #3a3a3a;border-radius:3px;background:#fff"></div>
<div class="t" style="left:622.5px;top:55.4px;width:47.9px;text-align:center;font-size:12px;color:#222;letter-spacing:0px">Material</div>
<div class="b" style="left:968.5px;top:49.97999999999999px;width:20px;height:22.74px;background:#fff;border:1px solid #d0d0d0;border-bottom-color:#bbb"></div>
<div class="t" style="left:973.5px;top:56.2px;font-size:11px;color:#222;font-weight:bold;">...</div>
<div class="b" style="left:0px;top:97.46px;width:969px;height:1px;background:#e3e3e3"></div>
<div class="b" style="left:336.79999999999995px;top:73.22px;width:1px;height:24.74px;background:#e6e6e6"></div>
<div class="b" style="left:413.5px;top:73.22px;width:1px;height:24.74px;background:#e6e6e6"></div>
<div class="t" style="left:1.5px;top:80.1px;font-size:12px;color:#a6a6a6;width:334px;overflow:hidden">Ausschnitte für Luftleitungen, oval</div>
<div class="t" style="left:339.5px;top:80.1px;font-size:12px;color:#a6a6a6;">DIN18379</div>
<div class="b" style="left:420.5px;top:76.4px;width:70px;height:19.6px;border:1.3px solid #3a3a3a;border-radius:3px;background:#fff"></div>
<div class="t" style="left:420.5px;top:80.1px;width:70px;text-align:center;font-size:12px;color:#222;letter-spacing:0px">Bauteilname</div>
<div class="b" style="left:493.5px;top:76.4px;width:126px;height:19.6px;border:1.3px solid #3a3a3a;border-radius:3px;background:#fff"></div>
<div class="t" style="left:493.5px;top:80.1px;width:126px;text-align:center;font-size:12px;color:#222;letter-spacing:0px">Dimension (Ausschnitt)</div>
<div class="b" style="left:622.5px;top:76.4px;width:47.9px;height:19.6px;border:1.3px solid #3a3a3a;border-radius:3px;background:#fff"></div>
<div class="t" style="left:622.5px;top:80.1px;width:47.9px;text-align:center;font-size:12px;color:#222;letter-spacing:0px">Material</div>
<div class="b" style="left:968.5px;top:74.72px;width:20px;height:22.74px;background:#fff;border:1px solid #d0d0d0;border-bottom-color:#bbb"></div>
<div class="t" style="left:973.5px;top:81.0px;font-size:11px;color:#222;font-weight:bold;">...</div>
<div class="b" style="left:0px;top:122.19999999999997px;width:969px;height:1px;background:#e3e3e3"></div>
<div class="b" style="left:336.79999999999995px;top:97.95999999999998px;width:1px;height:24.74px;background:#e6e6e6"></div>
<div class="b" style="left:413.5px;top:97.95999999999998px;width:1px;height:24.74px;background:#e6e6e6"></div>
<div class="t" style="left:1.5px;top:104.8px;font-size:12px;color:#222;width:334px;overflow:hidden">Luftleitungsdämmung für Luftleitungen, eckig</div>
<div class="t" style="left:339.5px;top:104.8px;font-size:12px;color:#222;">DIN18421</div>
<div class="b" style="left:420.5px;top:101.2px;width:70px;height:19.6px;border:1.3px solid #3a3a3a;border-radius:3px;background:#fff"></div>
<div class="t" style="left:420.5px;top:104.9px;width:70px;text-align:center;font-size:12px;color:#222;letter-spacing:0px">Bauteilname</div>
<div class="b" style="left:493.5px;top:101.2px;width:47.9px;height:19.6px;border:1.3px solid #3a3a3a;border-radius:3px;background:#fff"></div>
<div class="t" style="left:493.5px;top:104.9px;width:47.9px;text-align:center;font-size:12px;color:#222;letter-spacing:0px">Material</div>
<div class="b" style="left:544.4px;top:101.2px;width:92.4px;height:19.6px;border:1.3px solid #3a3a3a;border-radius:3px;background:#fff"></div>
<div class="t" style="left:544.4px;top:104.9px;width:92.4px;text-align:center;font-size:12px;color:#222;letter-spacing:0px">Dämmungsdicke</div>
<div class="b" style="left:639.8px;top:101.2px;width:112.9px;height:19.6px;border:1.3px solid #3a3a3a;border-radius:3px;background:#fff"></div>
<div class="t" style="left:639.8px;top:104.9px;width:112.9px;text-align:center;font-size:12px;color:#222;letter-spacing:0px">Abrechnungsgruppe</div>
<div class="b" style="left:968.5px;top:99.45999999999998px;width:20px;height:22.74px;background:#fff;border:1px solid #d0d0d0;border-bottom-color:#bbb"></div>
<div class="t" style="left:973.5px;top:105.7px;font-size:11px;color:#222;font-weight:bold;">...</div>
<div class="b" style="left:0px;top:146.94px;width:969px;height:1px;background:#e3e3e3"></div>
<div class="b" style="left:336.79999999999995px;top:122.69999999999999px;width:1px;height:24.74px;background:#e6e6e6"></div>
<div class="b" style="left:413.5px;top:122.69999999999999px;width:1px;height:24.74px;background:#e6e6e6"></div>
<div class="t" style="left:1.5px;top:129.5px;font-size:12px;color:#222;width:334px;overflow:hidden">Luftleitungsdämmung für Luftleitungen, rund</div>
<div class="t" style="left:339.5px;top:129.5px;font-size:12px;color:#222;">DIN18421</div>
<div class="b" style="left:420.5px;top:125.9px;width:70px;height:19.6px;border:1.3px solid #3a3a3a;border-radius:3px;background:#fff"></div>
<div class="t" style="left:420.5px;top:129.6px;width:70px;text-align:center;font-size:12px;color:#222;letter-spacing:0px">Bauteilname</div>
<div class="b" style="left:493.5px;top:125.9px;width:96.4px;height:19.6px;border:1.3px solid #3a3a3a;border-radius:3px;background:#fff"></div>
<div class="t" style="left:493.5px;top:129.6px;width:96.4px;text-align:center;font-size:12px;color:#222;letter-spacing:-0.25px">Rohrdurchmesser</div>
<div class="b" style="left:592.9px;top:125.9px;width:47.9px;height:19.6px;border:1.3px solid #3a3a3a;border-radius:3px;background:#fff"></div>
<div class="t" style="left:592.9px;top:129.6px;width:47.9px;text-align:center;font-size:12px;color:#222;letter-spacing:0px">Material</div>
<div class="b" style="left:643.8px;top:125.9px;width:92.4px;height:19.6px;border:1.3px solid #3a3a3a;border-radius:3px;background:#fff"></div>
<div class="t" style="left:643.8px;top:129.6px;width:92.4px;text-align:center;font-size:12px;color:#222;letter-spacing:0px">Dämmungsdicke</div>
<div class="b" style="left:968.5px;top:124.19999999999999px;width:20px;height:22.74px;background:#fff;border:1px solid #d0d0d0;border-bottom-color:#bbb"></div>
<div class="t" style="left:973.5px;top:130.5px;font-size:11px;color:#222;font-weight:bold;">...</div>
<div class="b" style="left:0px;top:171.68px;width:969px;height:1px;background:#e3e3e3"></div>
<div class="b" style="left:336.79999999999995px;top:147.44px;width:1px;height:24.74px;background:#e6e6e6"></div>
<div class="b" style="left:413.5px;top:147.44px;width:1px;height:24.74px;background:#e6e6e6"></div>
<div class="t" style="left:1.5px;top:154.3px;font-size:12px;color:#a6a6a6;width:334px;overflow:hidden">Luftleitungsdämmung für Luftleitungen, oval</div>
<div class="t" style="left:339.5px;top:154.3px;font-size:12px;color:#a6a6a6;">DIN18421</div>
<div class="b" style="left:420.5px;top:150.6px;width:70px;height:19.6px;border:1.3px solid #3a3a3a;border-radius:3px;background:#fff"></div>
<div class="t" style="left:420.5px;top:154.3px;width:70px;text-align:center;font-size:12px;color:#222;letter-spacing:0px">Bauteilname</div>
<div class="b" style="left:493.5px;top:150.6px;width:74.3px;height:19.6px;border:1.3px solid #3a3a3a;border-radius:3px;background:#fff"></div>
<div class="t" style="left:493.5px;top:154.3px;width:74.3px;text-align:center;font-size:12px;color:#222;letter-spacing:0px">Dimensionen</div>
<div class="b" style="left:570.8px;top:150.6px;width:47.9px;height:19.6px;border:1.3px solid #3a3a3a;border-radius:3px;background:#fff"></div>
<div class="t" style="left:570.8px;top:154.3px;width:47.9px;text-align:center;font-size:12px;color:#222;letter-spacing:0px">Material</div>
<div class="b" style="left:621.7px;top:150.6px;width:92.4px;height:19.6px;border:1.3px solid #3a3a3a;border-radius:3px;background:#fff"></div>
<div class="t" style="left:621.7px;top:154.3px;width:92.4px;text-align:center;font-size:12px;color:#222;letter-spacing:0px">Dämmungsdicke</div>
<div class="b" style="left:968.5px;top:148.94px;width:20px;height:22.74px;background:#fff;border:1px solid #d0d0d0;border-bottom-color:#bbb"></div>
<div class="t" style="left:973.5px;top:155.2px;font-size:11px;color:#222;font-weight:bold;">...</div>
<div class="b" style="left:0px;top:196.41999999999996px;width:969px;height:1px;background:#e3e3e3"></div>
<div class="b" style="left:336.79999999999995px;top:172.17999999999995px;width:1px;height:24.74px;background:#e6e6e6"></div>
<div class="b" style="left:413.5px;top:172.17999999999995px;width:1px;height:24.74px;background:#e6e6e6"></div>
<div class="t" style="left:1.5px;top:179.0px;font-size:12px;color:#a6a6a6;width:334px;overflow:hidden">Luftleitungsdämmung für Luftleitungen, eckig, mit Ausschnitten</div>
<div class="t" style="left:339.5px;top:179.0px;font-size:12px;color:#a6a6a6;">DIN18421</div>
<div class="b" style="left:420.5px;top:175.4px;width:70px;height:19.6px;border:1.3px solid #3a3a3a;border-radius:3px;background:#fff"></div>
<div class="t" style="left:420.5px;top:179.1px;width:70px;text-align:center;font-size:12px;color:#222;letter-spacing:0px">Bauteilname</div>
<div class="b" style="left:493.5px;top:175.4px;width:47.9px;height:19.6px;border:1.3px solid #3a3a3a;border-radius:3px;background:#fff"></div>
<div class="t" style="left:493.5px;top:179.1px;width:47.9px;text-align:center;font-size:12px;color:#222;letter-spacing:0px">Material</div>
<div class="b" style="left:544.4px;top:175.4px;width:92.4px;height:19.6px;border:1.3px solid #3a3a3a;border-radius:3px;background:#fff"></div>
<div class="t" style="left:544.4px;top:179.1px;width:92.4px;text-align:center;font-size:12px;color:#222;letter-spacing:0px">Dämmungsdicke</div>
<div class="b" style="left:639.8px;top:175.4px;width:112.9px;height:19.6px;border:1.3px solid #3a3a3a;border-radius:3px;background:#fff"></div>
<div class="t" style="left:639.8px;top:179.1px;width:112.9px;text-align:center;font-size:12px;color:#222;letter-spacing:0px">Abrechnungsgruppe</div>
<div class="b" style="left:968.5px;top:173.67999999999995px;width:20px;height:22.74px;background:#fff;border:1px solid #d0d0d0;border-bottom-color:#bbb"></div>
<div class="t" style="left:973.5px;top:179.9px;font-size:11px;color:#222;font-weight:bold;">...</div>
<div class="b" style="left:0px;top:221.15999999999997px;width:969px;height:1px;background:#e3e3e3"></div>
<div class="b" style="left:336.79999999999995px;top:196.91999999999996px;width:1px;height:24.74px;background:#e6e6e6"></div>
<div class="b" style="left:413.5px;top:196.91999999999996px;width:1px;height:24.74px;background:#e6e6e6"></div>
<div class="t" style="left:1.5px;top:203.8px;font-size:12px;color:#a6a6a6;width:334px;overflow:hidden">Luftleitungsdämmung für Luftleitungen, rund, mit Ausschnitten</div>
<div class="t" style="left:339.5px;top:203.8px;font-size:12px;color:#a6a6a6;">DIN18421</div>
<div class="b" style="left:420.5px;top:200.1px;width:70px;height:19.6px;border:1.3px solid #3a3a3a;border-radius:3px;background:#fff"></div>
<div class="t" style="left:420.5px;top:203.8px;width:70px;text-align:center;font-size:12px;color:#222;letter-spacing:0px">Bauteilname</div>
<div class="b" style="left:493.5px;top:200.1px;width:96.4px;height:19.6px;border:1.3px solid #3a3a3a;border-radius:3px;background:#fff"></div>
<div class="t" style="left:493.5px;top:203.8px;width:96.4px;text-align:center;font-size:12px;color:#222;letter-spacing:-0.25px">Rohrdurchmesser</div>
<div class="b" style="left:592.9px;top:200.1px;width:47.9px;height:19.6px;border:1.3px solid #3a3a3a;border-radius:3px;background:#fff"></div>
<div class="t" style="left:592.9px;top:203.8px;width:47.9px;text-align:center;font-size:12px;color:#222;letter-spacing:0px">Material</div>
<div class="b" style="left:643.8px;top:200.1px;width:92.4px;height:19.6px;border:1.3px solid #3a3a3a;border-radius:3px;background:#fff"></div>
<div class="t" style="left:643.8px;top:203.8px;width:92.4px;text-align:center;font-size:12px;color:#222;letter-spacing:0px">Dämmungsdicke</div>
<div class="b" style="left:968.5px;top:198.41999999999996px;width:20px;height:22.74px;background:#fff;border:1px solid #d0d0d0;border-bottom-color:#bbb"></div>
<div class="t" style="left:973.5px;top:204.7px;font-size:11px;color:#222;font-weight:bold;">...</div>
<div class="b" style="left:0px;top:245.89999999999998px;width:969px;height:1px;background:#e3e3e3"></div>
<div class="b" style="left:336.79999999999995px;top:221.65999999999997px;width:1px;height:24.74px;background:#e6e6e6"></div>
<div class="b" style="left:413.5px;top:221.65999999999997px;width:1px;height:24.74px;background:#e6e6e6"></div>
<div class="t" style="left:1.5px;top:228.5px;font-size:12px;color:#a6a6a6;width:334px;overflow:hidden">Luftleitungsdämmung für Luftleitungen, oval, mit Ausschnitten</div>
<div class="t" style="left:339.5px;top:228.5px;font-size:12px;color:#a6a6a6;">DIN18421</div>
<div class="b" style="left:420.5px;top:224.9px;width:70px;height:19.6px;border:1.3px solid #3a3a3a;border-radius:3px;background:#fff"></div>
<div class="t" style="left:420.5px;top:228.6px;width:70px;text-align:center;font-size:12px;color:#222;letter-spacing:0px">Bauteilname</div>
<div class="b" style="left:493.5px;top:224.9px;width:74.3px;height:19.6px;border:1.3px solid #3a3a3a;border-radius:3px;background:#fff"></div>
<div class="t" style="left:493.5px;top:228.6px;width:74.3px;text-align:center;font-size:12px;color:#222;letter-spacing:0px">Dimensionen</div>
<div class="b" style="left:570.8px;top:224.9px;width:47.9px;height:19.6px;border:1.3px solid #3a3a3a;border-radius:3px;background:#fff"></div>
<div class="t" style="left:570.8px;top:228.6px;width:47.9px;text-align:center;font-size:12px;color:#222;letter-spacing:0px">Material</div>
<div class="b" style="left:621.7px;top:224.9px;width:92.4px;height:19.6px;border:1.3px solid #3a3a3a;border-radius:3px;background:#fff"></div>
<div class="t" style="left:621.7px;top:228.6px;width:92.4px;text-align:center;font-size:12px;color:#222;letter-spacing:0px">Dämmungsdicke</div>
<div class="b" style="left:968.5px;top:223.15999999999997px;width:20px;height:22.74px;background:#fff;border:1px solid #d0d0d0;border-bottom-color:#bbb"></div>
<div class="t" style="left:973.5px;top:229.4px;font-size:11px;color:#222;font-weight:bold;">...</div>
<div class="b" style="left:0px;top:270.64px;width:969px;height:1px;background:#e3e3e3"></div>
<div class="b" style="left:336.79999999999995px;top:246.39999999999998px;width:1px;height:24.74px;background:#e6e6e6"></div>
<div class="b" style="left:413.5px;top:246.39999999999998px;width:1px;height:24.74px;background:#e6e6e6"></div>
<div class="t" style="left:1.5px;top:253.2px;font-size:12px;color:#a6a6a6;width:334px;overflow:hidden">Ausschnitte in Luftleitungsdämmung</div>
<div class="t" style="left:339.5px;top:253.2px;font-size:12px;color:#a6a6a6;">DIN18421</div>
<div class="b" style="left:420.5px;top:249.6px;width:70px;height:19.6px;border:1.3px solid #3a3a3a;border-radius:3px;background:#fff"></div>
<div class="t" style="left:420.5px;top:253.3px;width:70px;text-align:center;font-size:12px;color:#222;letter-spacing:0px">Bauteilname</div>
<div class="b" style="left:493.5px;top:249.6px;width:126px;height:19.6px;border:1.3px solid #3a3a3a;border-radius:3px;background:#fff"></div>
<div class="t" style="left:493.5px;top:253.3px;width:126px;text-align:center;font-size:12px;color:#222;letter-spacing:0px">Dimension (Ausschnitt)</div>
<div class="b" style="left:622.5px;top:249.6px;width:47.9px;height:19.6px;border:1.3px solid #3a3a3a;border-radius:3px;background:#fff"></div>
<div class="t" style="left:622.5px;top:253.3px;width:47.9px;text-align:center;font-size:12px;color:#222;letter-spacing:0px">Material</div>
<div class="b" style="left:673.4px;top:249.6px;width:92.4px;height:19.6px;border:1.3px solid #3a3a3a;border-radius:3px;background:#fff"></div>
<div class="t" style="left:673.4px;top:253.3px;width:92.4px;text-align:center;font-size:12px;color:#222;letter-spacing:0px">Dämmungsdicke</div>
<div class="b" style="left:968.5px;top:247.89999999999998px;width:20px;height:22.74px;background:#fff;border:1px solid #d0d0d0;border-bottom-color:#bbb"></div>
<div class="t" style="left:973.5px;top:254.2px;font-size:11px;color:#222;font-weight:bold;">...</div>
<div class="b" style="left:0px;top:271.14px;width:988.5px;height:24.74px;background:#efefef"></div>
<div class="b" style="left:0px;top:295.38px;width:969px;height:1px;background:#e3e3e3"></div>
<div class="b" style="left:336.79999999999995px;top:271.14px;width:1px;height:24.74px;background:#e6e6e6"></div>
<div class="b" style="left:413.5px;top:271.14px;width:1px;height:24.74px;background:#e6e6e6"></div>
<div class="t" style="left:1.5px;top:278.0px;font-size:12px;color:#222;width:334px;overflow:hidden">Formstücke für Luftleitungen, eckig</div>
<div class="t" style="left:339.5px;top:278.0px;font-size:12px;color:#222;">DIN18379</div>
<div class="b" style="left:420.5px;top:274.3px;width:70px;height:19.6px;border:1.3px solid #3a3a3a;border-radius:3px;background:#f4f4f4"></div>
<div class="t" style="left:420.5px;top:278.0px;width:70px;text-align:center;font-size:12px;color:#222;letter-spacing:0px">Bauteilname</div>
<div class="b" style="left:493.5px;top:274.3px;width:104px;height:19.6px;border:1.3px solid #3a3a3a;border-radius:3px;background:#f4f4f4"></div>
<div class="t" style="left:493.5px;top:278.0px;width:104px;text-align:center;font-size:12px;color:#222;letter-spacing:0px">Dämmungsangabe</div>
<div class="b" style="left:600.5px;top:274.3px;width:92.4px;height:19.6px;border:1.3px solid #3a3a3a;border-radius:3px;background:#f4f4f4"></div>
<div class="t" style="left:600.5px;top:278.0px;width:92.4px;text-align:center;font-size:12px;color:#222;letter-spacing:0px">Dämmungsdicke</div>
<div class="b" style="left:695.9px;top:274.3px;width:112.9px;height:19.6px;border:1.3px solid #3a3a3a;border-radius:3px;background:#f4f4f4"></div>
<div class="t" style="left:695.9px;top:278.0px;width:112.9px;text-align:center;font-size:12px;color:#222;letter-spacing:0px">Abrechnungsgruppe</div>
<div class="b" style="left:811.8px;top:274.3px;width:72.6px;height:19.6px;border:1.3px solid #3a3a3a;border-radius:3px;background:#f4f4f4"></div>
<div class="t" style="left:811.8px;top:278.0px;width:72.6px;text-align:center;font-size:12px;color:#222;letter-spacing:0px">Kommentare</div>
<div class="b" style="left:968.5px;top:272.64px;width:20px;height:22.74px;background:#fff;border:1px solid #d0d0d0;border-bottom-color:#bbb"></div>
<div class="t" style="left:973.5px;top:278.9px;font-size:11px;color:#222;font-weight:bold;">...</div>
<div class="b" style="left:0px;top:320.12px;width:969px;height:1px;background:#e3e3e3"></div>
<div class="b" style="left:336.79999999999995px;top:295.88px;width:1px;height:24.74px;background:#e6e6e6"></div>
<div class="b" style="left:413.5px;top:295.88px;width:1px;height:24.74px;background:#e6e6e6"></div>
<div class="t" style="left:1.5px;top:302.7px;font-size:12px;color:#222;width:334px;overflow:hidden">Formstücke für Luftleitungen, rund</div>
<div class="t" style="left:339.5px;top:302.7px;font-size:12px;color:#222;">DIN18379</div>
<div class="b" style="left:420.5px;top:299.1px;width:70px;height:19.6px;border:1.3px solid #3a3a3a;border-radius:3px;background:#fff"></div>
<div class="t" style="left:420.5px;top:302.8px;width:70px;text-align:center;font-size:12px;color:#222;letter-spacing:0px">Bauteilname</div>
<div class="b" style="left:493.5px;top:299.1px;width:104px;height:19.6px;border:1.3px solid #3a3a3a;border-radius:3px;background:#fff"></div>
<div class="t" style="left:493.5px;top:302.8px;width:104px;text-align:center;font-size:12px;color:#222;letter-spacing:0px">Dämmungsangabe</div>
<div class="b" style="left:600.5px;top:299.1px;width:92.4px;height:19.6px;border:1.3px solid #3a3a3a;border-radius:3px;background:#fff"></div>
<div class="t" style="left:600.5px;top:302.8px;width:92.4px;text-align:center;font-size:12px;color:#222;letter-spacing:0px">Dämmungsdicke</div>
<div class="b" style="left:695.9px;top:299.1px;width:72.6px;height:19.6px;border:1.3px solid #3a3a3a;border-radius:3px;background:#fff"></div>
<div class="t" style="left:695.9px;top:302.8px;width:72.6px;text-align:center;font-size:12px;color:#222;letter-spacing:0px">Kommentare</div>
<div class="b" style="left:968.5px;top:297.38px;width:20px;height:22.74px;background:#fff;border:1px solid #d0d0d0;border-bottom-color:#bbb"></div>
<div class="t" style="left:973.5px;top:303.6px;font-size:11px;color:#222;font-weight:bold;">...</div>
</div>
<div class="b" style="left:1876px;top:141px;width:15.5px;height:300px;background:#f0f0f0"></div>
<div class="b" style="left:1877px;top:186px;width:13.5px;height:67.6px;background:#cdcdcd"></div>
<svg style="left:1879px;top:147px" width="9" height="5"><path d="M1.5 4.5 L4.5 1.5 L7.5 4.5" stroke="#aaa" fill="none" stroke-width="1"/></svg>
<svg style="left:1879px;top:429px" width="9" height="5"><path d="M0.5 0.5 L4.5 4.5 L8.5 0.5" stroke="#999" fill="none" stroke-width="1"/></svg>
<div class="b" style="left:879px;top:455.8px;width:1015px;height:1.2px;background:#c8c8c8"></div>
<div class="b" style="left:879px;top:459.8px;width:1015px;height:1.2px;background:#c8c8c8"></div>
<div class="t" style="left:886.5px;top:476.1px;font-size:13.5px;color:#222;font-weight:bold;">Aufmaß</div>
<div class="b" style="left:891px;top:504.5px;width:27.3px;height:21.3px;border:1.5px solid #333;background:#f6f6f6"></div>
<svg style="left:897px;top:507.5px" width="16" height="16"><path d="M12.5 8 A5 5 0 1 1 9.5 3.3" fill="none" stroke="#111" stroke-width="2.3"/><path d="M7.5 0.5 L13 3.5 L8 7Z" fill="#111"/></svg>
<div class="b" style="left:925.6px;top:504.5px;width:27.4px;height:21.3px;border:1.5px solid #333;background:#f6f6f6"></div>
<svg style="left:930px;top:507px" width="20" height="17"><path d="M1 1.5 H15 L10 8 V13 L6 11 V8 Z" fill="#ccd" stroke="#888" stroke-width="1.1"/><circle cx="14" cy="11.5" r="4.3" fill="#c0392b"/><path d="M14 9 v3" stroke="#fff" stroke-width="1.4"/><circle cx="14" cy="13.8" r="0.7" fill="#fff"/></svg>
<div class="b" style="left:960.5px;top:504.5px;width:165.5px;height:21.5px;background:#e6e6e6;border:1px solid #cdcdcd"></div>
<div class="t" style="left:966.5px;top:509.8px;font-size:11.5px;color:#222;">Positionsnummer (Kreis A)</div>
<svg style="left:1112px;top:511px" width="8" height="5"><path d="M0.5 0.5 L4 4 L7.5 0.5" stroke="#555" fill="none" stroke-width="1.1"/></svg>
<div class="b" style="left:1132.6px;top:504.5px;width:27.5px;height:21.5px;border:1.5px solid #333;background:#a9c3ea"></div>
<svg style="left:1137px;top:507px" width="19" height="16"><path d="M4 3 V13 H9 M4 8 H9" stroke="#445" stroke-width="1.3" fill="none"/><circle cx="4" cy="3" r="2" fill="#5a5"/><circle cx="9" cy="8" r="1.8" fill="#d44"/><circle cx="9" cy="13" r="1.8" fill="#55a"/><text x="12" y="8" font-size="7" fill="#333" font-family="Liberation Sans">Σ</text></svg>
<div class="b" style="left:1164.6px;top:504.5px;width:27px;height:21.5px;border:1.5px solid #333;background:#a9c3ea"></div>
<svg style="left:1171px;top:508px" width="14" height="14"><rect x="1" y="1" width="3" height="12" fill="#222"/><path d="M6 3 H12 M6 7 H10 M6 11 H12 M7 3 V11" stroke="#222" stroke-width="1.8"/></svg>
<div class="b" style="left:1199.4px;top:504.5px;width:27.2px;height:21.5px;border:1.5px solid #333;background:#f6f6f6"></div>
<svg style="left:1205px;top:508px" width="16" height="16"><circle cx="6" cy="6" r="4.5" fill="none" stroke="#111" stroke-width="2"/><path d="M9.3 9.3 L14 14" stroke="#111" stroke-width="2.6"/></svg>
<div class="b" style="left:1750px;top:504.3px;width:27.7px;height:21.4px;border:1.5px solid #333;background:#f6f6f6"></div>
<svg style="left:1756px;top:508px" width="16" height="14"><path d="M1 4 V1 H4 M12 1 H15 V4 M15 10 V13 H12 M4 13 H1 V10" stroke="#222" stroke-width="1.4" fill="none"/><rect x="4" y="4" width="8" height="2.3" fill="#222"/><rect x="4" y="8" width="8" height="2.3" fill="none" stroke="#222" stroke-width="1"/></svg>
<div class="b" style="left:1782.8px;top:504.3px;width:104.7px;height:21.4px;border:1.5px solid #333;background:#f6f6f6"></div>
<svg style="left:1789px;top:506px" width="16" height="18"><path d="M1 1 H9 L13 5 V16 H1 Z" fill="#fff" stroke="#666" stroke-width="1"/><path d="M4 10 H11 M8.5 7.5 L11 10 L8.5 12.5" stroke="#1e3c9a" stroke-width="2" fill="none"/></svg>
<div class="t" style="left:1810px;top:510.3px;font-size:12px;color:#222;">Exportieren...</div>
<div class="b" style="left:886.5px;top:536.5px;width:1005.5px;height:396px;border:1px solid #a4adb8;background:#fff"></div>
<div class="b" style="left:887.5px;top:537.5px;width:1003.5px;height:23px;background:linear-gradient(#fdfdfd,#f4f5f7 60%,#eceef1)"></div>
<div class="b" style="left:887.5px;top:560px;width:988.5px;height:1px;background:#dcdfe3"></div>
<div class="b" style="left:906px;top:537.5px;width:1px;height:394px;background:#e3e3e3"></div>
<div class="b" style="left:936px;top:537.5px;width:1px;height:394px;background:#e3e3e3"></div>
<div class="b" style="left:1718px;top:537.5px;width:1px;height:394px;background:#e3e3e3"></div>
<div class="b" style="left:1797.2px;top:537.5px;width:1px;height:394px;background:#e3e3e3"></div>
<div class="b" style="left:1826.7px;top:537.5px;width:1px;height:394px;background:#e3e3e3"></div>
<div class="t" style="left:911px;top:544.1px;font-size:12px;color:#333;">OZ</div>
<div class="t" style="left:941px;top:544.1px;font-size:12px;color:#333;">Kurztext</div>
<div class="t" style="left:1723px;top:544.1px;font-size:12px;color:#333;">Menge</div>
<div class="t" style="left:1801px;top:544.1px;font-size:12px;color:#333;">ME</div>
<div class="t" style="left:1832px;top:544.1px;font-size:12px;color:#333;">KG</div>
<div class="b" style="left:887.5px;top:560.0px;width:988.5px;height:24.8px;background:#eeeeee"></div>
<div class="b" style="left:887.5px;top:584.3px;width:988.5px;height:1px;background:#e3e3e3"></div>
<div class="b" style="left:1698px;top:561.5px;width:20px;height:22.3px;background:#fff;border:1px solid #d0d0d0;border-bottom-color:#bbb"></div>
<div class="t" style="left:1703px;top:568.8px;font-size:11px;color:#222;font-weight:bold;">...</div>
<div class="t" style="left:1720px;top:567.0px;width:72px;text-align:right;font-size:11.5px;color:#222">11</div>
<div class="t" style="left:1800px;top:567.8px;font-size:11.5px;color:#222;">Stck</div>
<div class="b" style="left:887.5px;top:609.0999999999999px;width:988.5px;height:1px;background:#e3e3e3"></div>
<div class="b" style="left:1698px;top:586.3px;width:20px;height:22.3px;background:#fff;border:1px solid #d0d0d0;border-bottom-color:#bbb"></div>
<div class="t" style="left:1703px;top:593.6px;font-size:11px;color:#222;font-weight:bold;">...</div>
<div class="t" style="left:1720px;top:591.8px;width:72px;text-align:right;font-size:11.5px;color:#222">9</div>
<div class="t" style="left:1800px;top:592.6px;font-size:11.5px;color:#222;">Stck</div>
<div class="b" style="left:887.5px;top:633.9px;width:988.5px;height:1px;background:#e3e3e3"></div>
<div class="b" style="left:1698px;top:611.1px;width:20px;height:22.3px;background:#fff;border:1px solid #d0d0d0;border-bottom-color:#bbb"></div>
<div class="t" style="left:1703px;top:618.4px;font-size:11px;color:#222;font-weight:bold;">...</div>
<div class="t" style="left:1720px;top:616.6px;width:72px;text-align:right;font-size:11.5px;color:#222">68,557</div>
<div class="t" style="left:1800px;top:617.4px;font-size:11.5px;color:#222;">m</div>
<div class="t" style="left:1810px;top:615.1px;font-size:7px;color:#222;font-weight:bold;">2</div>
<div class="b" style="left:887.5px;top:658.6999999999999px;width:988.5px;height:1px;background:#e3e3e3"></div>
<div class="b" style="left:1698px;top:635.9px;width:20px;height:22.3px;background:#fff;border:1px solid #d0d0d0;border-bottom-color:#bbb"></div>
<div class="t" style="left:1703px;top:643.2px;font-size:11px;color:#222;font-weight:bold;">...</div>
<div class="t" style="left:1720px;top:641.4px;width:72px;text-align:right;font-size:11.5px;color:#222">108,368</div>
<div class="t" style="left:1800px;top:642.2px;font-size:11.5px;color:#222;">m</div>
<div class="t" style="left:1810px;top:639.9px;font-size:7px;color:#222;font-weight:bold;">2</div>
<div class="b" style="left:887.5px;top:683.5px;width:988.5px;height:1px;background:#e3e3e3"></div>
<div class="b" style="left:1698px;top:660.7px;width:20px;height:22.3px;background:#fff;border:1px solid #d0d0d0;border-bottom-color:#bbb"></div>
<div class="t" style="left:1703px;top:668.0px;font-size:11px;color:#222;font-weight:bold;">...</div>
<div class="t" style="left:1720px;top:666.2px;width:72px;text-align:right;font-size:11.5px;color:#222">5,000</div>
<div class="t" style="left:1800px;top:667.0px;font-size:11.5px;color:#222;">m</div>
<div class="t" style="left:1810px;top:664.7px;font-size:7px;color:#222;font-weight:bold;">2</div>
<div class="b" style="left:887.5px;top:708.3px;width:988.5px;height:1px;background:#e3e3e3"></div>
<div class="b" style="left:1698px;top:685.5px;width:20px;height:22.3px;background:#fff;border:1px solid #d0d0d0;border-bottom-color:#bbb"></div>
<div class="t" style="left:1703px;top:692.8px;font-size:11px;color:#222;font-weight:bold;">...</div>
<div class="t" style="left:1720px;top:691.0px;width:72px;text-align:right;font-size:11.5px;color:#222">32,421</div>
<div class="t" style="left:1800px;top:691.8px;font-size:11.5px;color:#222;">m</div>
<div class="t" style="left:1810px;top:689.5px;font-size:7px;color:#222;font-weight:bold;">2</div>
<div class="b" style="left:887.5px;top:733.0999999999999px;width:988.5px;height:1px;background:#e3e3e3"></div>
<div class="b" style="left:1698px;top:710.3px;width:20px;height:22.3px;background:#fff;border:1px solid #d0d0d0;border-bottom-color:#bbb"></div>
<div class="t" style="left:1703px;top:717.6px;font-size:11px;color:#222;font-weight:bold;">...</div>
<div class="t" style="left:1720px;top:715.8px;width:72px;text-align:right;font-size:11.5px;color:#222">9,111</div>
<div class="t" style="left:1800px;top:716.6px;font-size:11.5px;color:#222;">m</div>
<div class="t" style="left:1810px;top:714.3px;font-size:7px;color:#222;font-weight:bold;">2</div>
<div class="b" style="left:887.5px;top:757.9px;width:988.5px;height:1px;background:#e3e3e3"></div>
<div class="b" style="left:1698px;top:735.1px;width:20px;height:22.3px;background:#fff;border:1px solid #d0d0d0;border-bottom-color:#bbb"></div>
<div class="t" style="left:1703px;top:742.4px;font-size:11px;color:#222;font-weight:bold;">...</div>
<div class="t" style="left:1720px;top:740.6px;width:72px;text-align:right;font-size:11.5px;color:#222">3,000</div>
<div class="t" style="left:1800px;top:741.4px;font-size:11.5px;color:#222;">m</div>
<div class="t" style="left:1810px;top:739.1px;font-size:7px;color:#222;font-weight:bold;">2</div>
<div class="b" style="left:887.5px;top:782.6999999999999px;width:988.5px;height:1px;background:#e3e3e3"></div>
<div class="b" style="left:1698px;top:759.9px;width:20px;height:22.3px;background:#fff;border:1px solid #d0d0d0;border-bottom-color:#bbb"></div>
<div class="t" style="left:1703px;top:767.2px;font-size:11px;color:#222;font-weight:bold;">...</div>
<div class="t" style="left:1720px;top:765.4px;width:72px;text-align:right;font-size:11.5px;color:#222">10,469</div>
<div class="t" style="left:1800px;top:766.2px;font-size:11.5px;color:#222;">m</div>
<div class="t" style="left:1810px;top:763.9px;font-size:7px;color:#222;font-weight:bold;">2</div>
<div class="b" style="left:887.5px;top:807.5px;width:988.5px;height:1px;background:#e3e3e3"></div>
<div class="b" style="left:1698px;top:784.7px;width:20px;height:22.3px;background:#fff;border:1px solid #d0d0d0;border-bottom-color:#bbb"></div>
<div class="t" style="left:1703px;top:792.0px;font-size:11px;color:#222;font-weight:bold;">...</div>
<div class="t" style="left:1720px;top:790.2px;width:72px;text-align:right;font-size:11.5px;color:#222">104,191</div>
<div class="t" style="left:1800px;top:791.0px;font-size:11.5px;color:#222;">m</div>
<div class="t" style="left:1810px;top:788.7px;font-size:7px;color:#222;font-weight:bold;">2</div>
<div class="b" style="left:887.5px;top:832.3px;width:988.5px;height:1px;background:#e3e3e3"></div>
<div class="b" style="left:1698px;top:809.5px;width:20px;height:22.3px;background:#fff;border:1px solid #d0d0d0;border-bottom-color:#bbb"></div>
<div class="t" style="left:1703px;top:816.8px;font-size:11px;color:#222;font-weight:bold;">...</div>
<div class="t" style="left:1720px;top:815.0px;width:72px;text-align:right;font-size:11.5px;color:#222">84,439</div>
<div class="t" style="left:1800px;top:815.8px;font-size:11.5px;color:#222;">m</div>
<div class="t" style="left:1810px;top:813.5px;font-size:7px;color:#222;font-weight:bold;">2</div>
<div class="b" style="left:887.5px;top:857.0999999999999px;width:988.5px;height:1px;background:#e3e3e3"></div>
<div class="b" style="left:1698px;top:834.3px;width:20px;height:22.3px;background:#fff;border:1px solid #d0d0d0;border-bottom-color:#bbb"></div>
<div class="t" style="left:1703px;top:841.6px;font-size:11px;color:#222;font-weight:bold;">...</div>
<div class="t" style="left:1720px;top:839.8px;width:72px;text-align:right;font-size:11.5px;color:#222">1</div>
<div class="t" style="left:1800px;top:840.6px;font-size:11.5px;color:#222;">Stck</div>
<div class="b" style="left:887.5px;top:881.9px;width:988.5px;height:1px;background:#e3e3e3"></div>
<div class="b" style="left:1698px;top:859.1px;width:20px;height:22.3px;background:#fff;border:1px solid #d0d0d0;border-bottom-color:#bbb"></div>
<div class="t" style="left:1703px;top:866.4px;font-size:11px;color:#222;font-weight:bold;">...</div>
<div class="t" style="left:1720px;top:864.6px;width:72px;text-align:right;font-size:11.5px;color:#222">13,857</div>
<div class="t" style="left:1800px;top:865.4px;font-size:11.5px;color:#222;">m</div>
<div class="t" style="left:1810px;top:863.1px;font-size:7px;color:#222;font-weight:bold;">2</div>
<div class="b" style="left:887.5px;top:906.7px;width:988.5px;height:1px;background:#e3e3e3"></div>
<div class="b" style="left:1698px;top:883.9000000000001px;width:20px;height:22.3px;background:#fff;border:1px solid #d0d0d0;border-bottom-color:#bbb"></div>
<div class="t" style="left:1703px;top:891.2px;font-size:11px;color:#222;font-weight:bold;">...</div>
<div class="t" style="left:1720px;top:889.4px;width:72px;text-align:right;font-size:11.5px;color:#222">152,100</div>
<div class="t" style="left:1800px;top:890.2px;font-size:11.5px;color:#222;">m</div>
<div class="t" style="left:1810px;top:887.9px;font-size:7px;color:#222;font-weight:bold;">2</div>
<div class="b" style="left:887.5px;top:931.5px;width:988.5px;height:1px;background:#e3e3e3"></div>
<div class="b" style="left:1698px;top:908.7px;width:20px;height:22.3px;background:#fff;border:1px solid #d0d0d0;border-bottom-color:#bbb"></div>
<div class="t" style="left:1703px;top:916.0px;font-size:11px;color:#222;font-weight:bold;">...</div>
<div class="t" style="left:1720px;top:914.2px;width:72px;text-align:right;font-size:11.5px;color:#222">58,797</div>
<div class="t" style="left:1800px;top:915.0px;font-size:11.5px;color:#222;">m</div>
<div class="t" style="left:1810px;top:912.7px;font-size:7px;color:#222;font-weight:bold;">2</div>
<svg style="left:891px;top:566.5px" width="10" height="10"><circle cx="5" cy="5" r="4.6" fill="#8e1b12"/><path d="M5 2.3 V5.6" stroke="#fff" stroke-width="1.5"/><circle cx="5" cy="7.5" r="0.8" fill="#fff"/></svg>
<div class="t" style="left:909px;top:567.8px;font-size:11.5px;color:#222;">9.5</div>
<div class="t" style="left:937px;top:567.3px;font-size:12px;color:#222;">Bogen</div>
<div class="b" style="left:1876px;top:561px;width:15.5px;height:370.5px;background:#f0f0f0"></div>
<div class="b" style="left:1877.4px;top:655.6px;width:13.6px;height:22px;background:#cdcdcd"></div>
<svg style="left:1879px;top:570px" width="9" height="5"><path d="M0.5 4.5 L4.5 0.5 L8.5 4.5" stroke="#999" fill="none" stroke-width="1"/></svg>
<svg style="left:1879px;top:922px" width="9" height="5"><path d="M0.5 0.5 L4.5 4.5 L8.5 0.5" stroke="#999" fill="none" stroke-width="1"/></svg>
<svg style="left:1882px;top:955px" width="10" height="10"><g fill="#bbb"><rect x="7" y="1" width="1.5" height="1.5"/><rect x="4" y="4" width="1.5" height="1.5"/><rect x="7" y="4" width="1.5" height="1.5"/><rect x="1" y="7" width="1.5" height="1.5"/><rect x="4" y="7" width="1.5" height="1.5"/><rect x="7" y="7" width="1.5" height="1.5"/></g></svg>
<div class="b" style="left:879px;top:966px;width:1015px;height:11px;background:linear-gradient(#d8d8d8,#e8e8e8 30%,#ececec)"></div>
<svg style="left:1650px;top:978px" width="200" height="22">
<path d="M4 6 q6 -5 12 0 q-6 5 -12 0z" fill="#f0d040" stroke="#c0a010"/><path d="M8 8 l0 11 3 -3 3 5 2 -1 -3 -5 4 0z" fill="#fff" stroke="#333" stroke-width="0.9"/>
<path d="M28 16 l10 -8 v8z" fill="none" stroke="#2e63ad" stroke-width="1.4"/><path d="M36 3 l6 6 M42 3 l-6 6" stroke="#e02020" stroke-width="2"/><path d="M37 10 l0 10 3 -3 2 4" fill="#fff" stroke="#333" stroke-width="0.9"/>
<rect x="54" y="3" width="8" height="6" fill="#f0a040" stroke="#b06010"/><path d="M58 9 v9" stroke="#b06010" stroke-width="1.5"/><path d="M62 10 l0 10 3 -3 2 4" fill="#fff" stroke="#333" stroke-width="0.9"/>
<path d="M80 5 v13 l6 -3 v-13z" fill="none" stroke="#2e63ad" stroke-width="1.4"/><path d="M87 3 l6 6 M93 3 l-6 6" stroke="#e02020" stroke-width="2"/>
<path d="M106 8 h8 M110 4 v8" stroke="#222" stroke-width="1.6"/><path d="M112 9 l0 10 3 -3 2 4" fill="#fff" stroke="#333" stroke-width="0.9"/>
<circle cx="139" cy="12" r="6" fill="none" stroke="#c8c8c8" stroke-width="2" stroke-dasharray="2 1.5"/>
<path d="M155 4 h14 l-5 7 v8 h-4 v-8z" fill="#ccd" stroke="#444" stroke-width="1.2"/>
<text x="171" y="18" font-size="11" fill="#222" font-family="Liberation Sans">:1</text>
</svg>
<div class="b" style="left:660.5px;top:589.6px;width:988px;height:420px;background:#fff;border:1px solid #6f6f6f;border-left:2px solid #7a7a7a;box-shadow:-3px -2px 7px rgba(0,0,0,0.28)"></div>
<div class="t" style="left:670px;top:598.8px;font-size:12px;color:#222;">Mengensplit</div>
<div class="t" style="left:1576.5px;top:598.3px;font-size:12px;color:#333;">?</div>
<svg style="left:1619.5px;top:598.5px" width="12" height="12"><path d="M0.5 0.5 L11.5 11.5 M11.5 0.5 L0.5 11.5" stroke="#222" stroke-width="1.3"/></svg>
<div class="t" style="left:672px;top:633.6px;font-size:13px;color:#222;">9.5</div>
<div class="t" style="left:701.7px;top:633.6px;font-size:13px;color:#222;font-weight:bold;">Bogen</div>
<div class="b" style="left:672px;top:680px;width:965.5px;height:279px;border:1px solid #a4adb8;background:#fff"></div>
<div class="b" style="left:673px;top:681px;width:963.5px;height:22.5px;background:linear-gradient(#fdfdfd,#f4f5f7 60%,#eceef1)"></div>
<div class="b" style="left:673px;top:703.3px;width:963.5px;height:1px;background:#dcdfe3"></div>
<div class="b" style="left:692.2px;top:681px;width:1px;height:211px;background:#e3e3e3"></div>
<div class="b" style="left:692.2px;top:936px;width:1px;height:22px;background:#e3e3e3"></div>
<div class="b" style="left:970.7px;top:681px;width:1px;height:211px;background:#e3e3e3"></div>
<div class="b" style="left:970.7px;top:936px;width:1px;height:22px;background:#e3e3e3"></div>
<div class="b" style="left:1249.6px;top:681px;width:1px;height:211px;background:#e3e3e3"></div>
<div class="b" style="left:1249.6px;top:936px;width:1px;height:22px;background:#e3e3e3"></div>
<div class="b" style="left:1527.8px;top:681px;width:1px;height:211px;background:#e3e3e3"></div>
<div class="b" style="left:1527.8px;top:936px;width:1px;height:22px;background:#e3e3e3"></div>
<div class="b" style="left:1577.6px;top:681px;width:1px;height:211px;background:#e3e3e3"></div>
<div class="b" style="left:1577.6px;top:936px;width:1px;height:22px;background:#e3e3e3"></div>
<div class="b" style="left:1607px;top:681px;width:1px;height:211px;background:#e3e3e3"></div>
<div class="b" style="left:1607px;top:936px;width:1px;height:22px;background:#e3e3e3"></div>
<div class="t" style="left:697px;top:686.3px;font-size:11.5px;color:#333;">Positionsnummer</div>
<div class="t" style="left:975px;top:686.3px;font-size:11.5px;color:#333;">Referenzebene</div>
<div class="t" style="left:1254px;top:686.3px;font-size:11.5px;color:#333;">System</div>
<div class="t" style="left:1532px;top:686.3px;font-size:11.5px;color:#333;">Menge</div>
<div class="t" style="left:1582px;top:686.3px;font-size:11.5px;color:#333;">ME</div>
<div class="t" style="left:1612px;top:686.3px;font-size:11.5px;color:#333;">KG</div>
<div class="b" style="left:673px;top:721.85px;width:963.5px;height:1px;background:#e3e3e3"></div>
<svg style="left:677.5px;top:707.7px" width="10" height="10"><circle cx="5" cy="5" r="4.6" fill="#8e1b12"/><path d="M5 2.3 V5.6" stroke="#fff" stroke-width="1.5"/><circle cx="5" cy="7.5" r="0.8" fill="#fff"/></svg>
<div class="t" style="left:696px;top:707.3px;font-size:11.5px;color:#222;">7769</div>
<div class="t" style="left:974px;top:707.8px;font-size:11px;color:#222;">OG.04_OKFF</div>
<div class="t" style="left:1252px;top:707.3px;font-size:11.5px;color:#222;">Abluft</div>
<div class="t" style="left:1566px;top:707.3px;font-size:11.5px;color:#222;">1</div>
<div class="t" style="left:1580px;top:707.3px;font-size:11.5px;color:#222;">Stck</div>
<div class="b" style="left:673px;top:740.7px;width:963.5px;height:1px;background:#e3e3e3"></div>
<svg style="left:677.5px;top:726.6px" width="10" height="10"><circle cx="5" cy="5" r="4.6" fill="#8e1b12"/><path d="M5 2.3 V5.6" stroke="#fff" stroke-width="1.5"/><circle cx="5" cy="7.5" r="0.8" fill="#fff"/></svg>
<div class="t" style="left:696px;top:726.2px;font-size:11.5px;color:#222;">7770</div>
<div class="t" style="left:974px;top:726.6px;font-size:11px;color:#222;">DA.05_OKFB</div>
<div class="t" style="left:1252px;top:726.2px;font-size:11.5px;color:#222;">Abluft</div>
<div class="t" style="left:1566px;top:726.2px;font-size:11.5px;color:#222;">1</div>
<div class="t" style="left:1580px;top:726.2px;font-size:11.5px;color:#222;">Stck</div>
<div class="b" style="left:673px;top:759.5500000000001px;width:963.5px;height:1px;background:#e3e3e3"></div>
<svg style="left:677.5px;top:745.4px" width="10" height="10"><circle cx="5" cy="5" r="4.6" fill="#8e1b12"/><path d="M5 2.3 V5.6" stroke="#fff" stroke-width="1.5"/><circle cx="5" cy="7.5" r="0.8" fill="#fff"/></svg>
<div class="t" style="left:696px;top:745.0px;font-size:11.5px;color:#222;">7771</div>
<div class="t" style="left:974px;top:745.5px;font-size:11px;color:#222;">OG.03_OKFF</div>
<div class="t" style="left:1252px;top:745.0px;font-size:11.5px;color:#222;">Abluft</div>
<div class="t" style="left:1566px;top:745.0px;font-size:11.5px;color:#222;">1</div>
<div class="t" style="left:1580px;top:745.0px;font-size:11.5px;color:#222;">Stck</div>
<div class="b" style="left:673px;top:778.4px;width:963.5px;height:1px;background:#e3e3e3"></div>
<svg style="left:677.5px;top:764.2px" width="10" height="10"><circle cx="5" cy="5" r="4.6" fill="#8e1b12"/><path d="M5 2.3 V5.6" stroke="#fff" stroke-width="1.5"/><circle cx="5" cy="7.5" r="0.8" fill="#fff"/></svg>
<div class="t" style="left:696px;top:763.9px;font-size:11.5px;color:#222;">7772</div>
<div class="t" style="left:974px;top:764.3px;font-size:11px;color:#222;">OG.02_OKFF</div>
<div class="t" style="left:1252px;top:763.9px;font-size:11.5px;color:#222;">Abluft</div>
<div class="t" style="left:1566px;top:763.9px;font-size:11.5px;color:#222;">1</div>
<div class="t" style="left:1580px;top:763.9px;font-size:11.5px;color:#222;">Stck</div>
<div class="b" style="left:673px;top:797.25px;width:963.5px;height:1px;background:#e3e3e3"></div>
<svg style="left:677.5px;top:783.1px" width="10" height="10"><circle cx="5" cy="5" r="4.6" fill="#8e1b12"/><path d="M5 2.3 V5.6" stroke="#fff" stroke-width="1.5"/><circle cx="5" cy="7.5" r="0.8" fill="#fff"/></svg>
<div class="t" style="left:696px;top:782.7px;font-size:11.5px;color:#222;">7773</div>
<div class="t" style="left:974px;top:783.2px;font-size:11px;color:#222;">OG.01_OKRB</div>
<div class="t" style="left:1252px;top:782.7px;font-size:11.5px;color:#222;">Abluft</div>
<div class="t" style="left:1566px;top:782.7px;font-size:11.5px;color:#222;">1</div>
<div class="t" style="left:1580px;top:782.7px;font-size:11.5px;color:#222;">Stck</div>
<div class="b" style="left:673px;top:816.1px;width:963.5px;height:1px;background:#e3e3e3"></div>
<svg style="left:677.5px;top:802.0px" width="10" height="10"><circle cx="5" cy="5" r="4.6" fill="#8e1b12"/><path d="M5 2.3 V5.6" stroke="#fff" stroke-width="1.5"/><circle cx="5" cy="7.5" r="0.8" fill="#fff"/></svg>
<div class="t" style="left:696px;top:801.6px;font-size:11.5px;color:#222;">7774</div>
<div class="t" style="left:974px;top:802.0px;font-size:11px;color:#222;">OG.04_OKFF</div>
<div class="t" style="left:1252px;top:801.6px;font-size:11.5px;color:#222;">Abluft</div>
<div class="t" style="left:1566px;top:801.6px;font-size:11.5px;color:#222;">1</div>
<div class="t" style="left:1580px;top:801.6px;font-size:11.5px;color:#222;">Stck</div>
<div class="b" style="left:673px;top:834.95px;width:963.5px;height:1px;background:#e3e3e3"></div>
<svg style="left:677.5px;top:820.8px" width="10" height="10"><circle cx="5" cy="5" r="4.6" fill="#8e1b12"/><path d="M5 2.3 V5.6" stroke="#fff" stroke-width="1.5"/><circle cx="5" cy="7.5" r="0.8" fill="#fff"/></svg>
<div class="t" style="left:696px;top:820.4px;font-size:11.5px;color:#222;">7775</div>
<div class="t" style="left:974px;top:820.9px;font-size:11px;color:#222;">DA.05_OKFB</div>
<div class="t" style="left:1252px;top:820.4px;font-size:11.5px;color:#222;">Abluft</div>
<div class="t" style="left:1566px;top:820.4px;font-size:11.5px;color:#222;">1</div>
<div class="t" style="left:1580px;top:820.4px;font-size:11.5px;color:#222;">Stck</div>
<div class="b" style="left:673px;top:853.8000000000001px;width:963.5px;height:1px;background:#e3e3e3"></div>
<svg style="left:677.5px;top:839.7px" width="10" height="10"><circle cx="5" cy="5" r="4.6" fill="#8e1b12"/><path d="M5 2.3 V5.6" stroke="#fff" stroke-width="1.5"/><circle cx="5" cy="7.5" r="0.8" fill="#fff"/></svg>
<div class="t" style="left:696px;top:839.3px;font-size:11.5px;color:#222;">7776</div>
<div class="t" style="left:974px;top:839.7px;font-size:11px;color:#222;">OG.03_OKFF</div>
<div class="t" style="left:1252px;top:839.3px;font-size:11.5px;color:#222;">Abluft</div>
<div class="t" style="left:1566px;top:839.3px;font-size:11.5px;color:#222;">1</div>
<div class="t" style="left:1580px;top:839.3px;font-size:11.5px;color:#222;">Stck</div>
<div class="b" style="left:673px;top:872.65px;width:963.5px;height:1px;background:#e3e3e3"></div>
<svg style="left:677.5px;top:858.5px" width="10" height="10"><circle cx="5" cy="5" r="4.6" fill="#8e1b12"/><path d="M5 2.3 V5.6" stroke="#fff" stroke-width="1.5"/><circle cx="5" cy="7.5" r="0.8" fill="#fff"/></svg>
<div class="t" style="left:696px;top:858.1px;font-size:11.5px;color:#222;">7777</div>
<div class="t" style="left:974px;top:858.6px;font-size:11px;color:#222;">OG.02_OKFF</div>
<div class="t" style="left:1252px;top:858.1px;font-size:11.5px;color:#222;">Abluft</div>
<div class="t" style="left:1566px;top:858.1px;font-size:11.5px;color:#222;">1</div>
<div class="t" style="left:1580px;top:858.1px;font-size:11.5px;color:#222;">Stck</div>
<div class="b" style="left:673px;top:873.15px;width:963.5px;height:18.85px;background:#6f90c6"></div>
<div class="b" style="left:692.5px;top:873.15px;width:278.5px;height:18.85px;border:1.5px solid #1c2640"></div>
<svg style="left:677.5px;top:877.4px" width="10" height="10"><circle cx="5" cy="5" r="4.6" fill="#8e1b12"/><path d="M5 2.3 V5.6" stroke="#fff" stroke-width="1.5"/><circle cx="5" cy="7.5" r="0.8" fill="#fff"/></svg>
<div class="t" style="left:696px;top:877.0px;font-size:11.5px;color:#fff;">7778</div>
<div class="t" style="left:974px;top:877.4px;font-size:11px;color:#fff;">OG.01_OKRB</div>
<div class="t" style="left:1252px;top:877.0px;font-size:11.5px;color:#fff;">Abluft</div>
<div class="t" style="left:1566px;top:877.0px;font-size:11.5px;color:#fff;">1</div>
<div class="t" style="left:1580px;top:877.0px;font-size:11.5px;color:#fff;">Stck</div>
<div class="t" style="left:679px;top:898.8px;font-size:12px;color:#222;font-weight:bold;">Meldungen</div>
<svg style="left:679.5px;top:917.5px" width="10" height="10"><circle cx="5" cy="5" r="4.6" fill="#8e1b12"/><path d="M5 2.3 V5.6" stroke="#fff" stroke-width="1.5"/><circle cx="5" cy="7.5" r="0.8" fill="#fff"/></svg>
<div class="t" style="left:693px;top:916.8px;font-size:11.5px;color:#222;letter-spacing:-0.12px">Aufmaßrelevante Dimensionen nicht gefunden: A, B, E, F, R, G</div>
<div class="b" style="left:673px;top:935.5px;width:963.5px;height:1px;background:#dedede"></div>
<svg style="left:677.5px;top:940.8px" width="10" height="10"><circle cx="5" cy="5" r="4.6" fill="#8e1b12"/><path d="M5 2.3 V5.6" stroke="#fff" stroke-width="1.5"/><circle cx="5" cy="7.5" r="0.8" fill="#fff"/></svg>
<div class="t" style="left:696px;top:940.3px;font-size:11.5px;color:#222;">7882</div>
<div class="t" style="left:974px;top:940.8px;font-size:11px;color:#222;">OG.01_OKFF</div>
<div class="t" style="left:1252px;top:940.3px;font-size:11.5px;color:#222;">Zuluft</div>
<div class="t" style="left:1566px;top:940.3px;font-size:11.5px;color:#222;">1</div>
<div class="t" style="left:1580px;top:940.3px;font-size:11.5px;color:#222;">Stck</div>
<div class="t" style="left:672px;top:972.3px;font-size:11.5px;color:#222;">Bauteile: 11</div>
<div class="t" style="left:1118px;top:972.3px;font-size:11.5px;color:#222;">Ausgewählt: 1</div>
<div class="b" style="left:1564.6px;top:969.9px;width:73.3px;height:21.5px;border:1.5px solid #333;background:#f6f6f6"></div>
<svg style="left:1572px;top:973px" width="15" height="15"><circle cx="6" cy="6" r="4.3" fill="none" stroke="#111" stroke-width="2"/><path d="M9 9 L13.5 13.5" stroke="#111" stroke-width="2.6"/></svg>
<div class="t" style="left:1591px;top:976.3px;font-size:12px;color:#222;">Zeigen</div>
</body></html>
